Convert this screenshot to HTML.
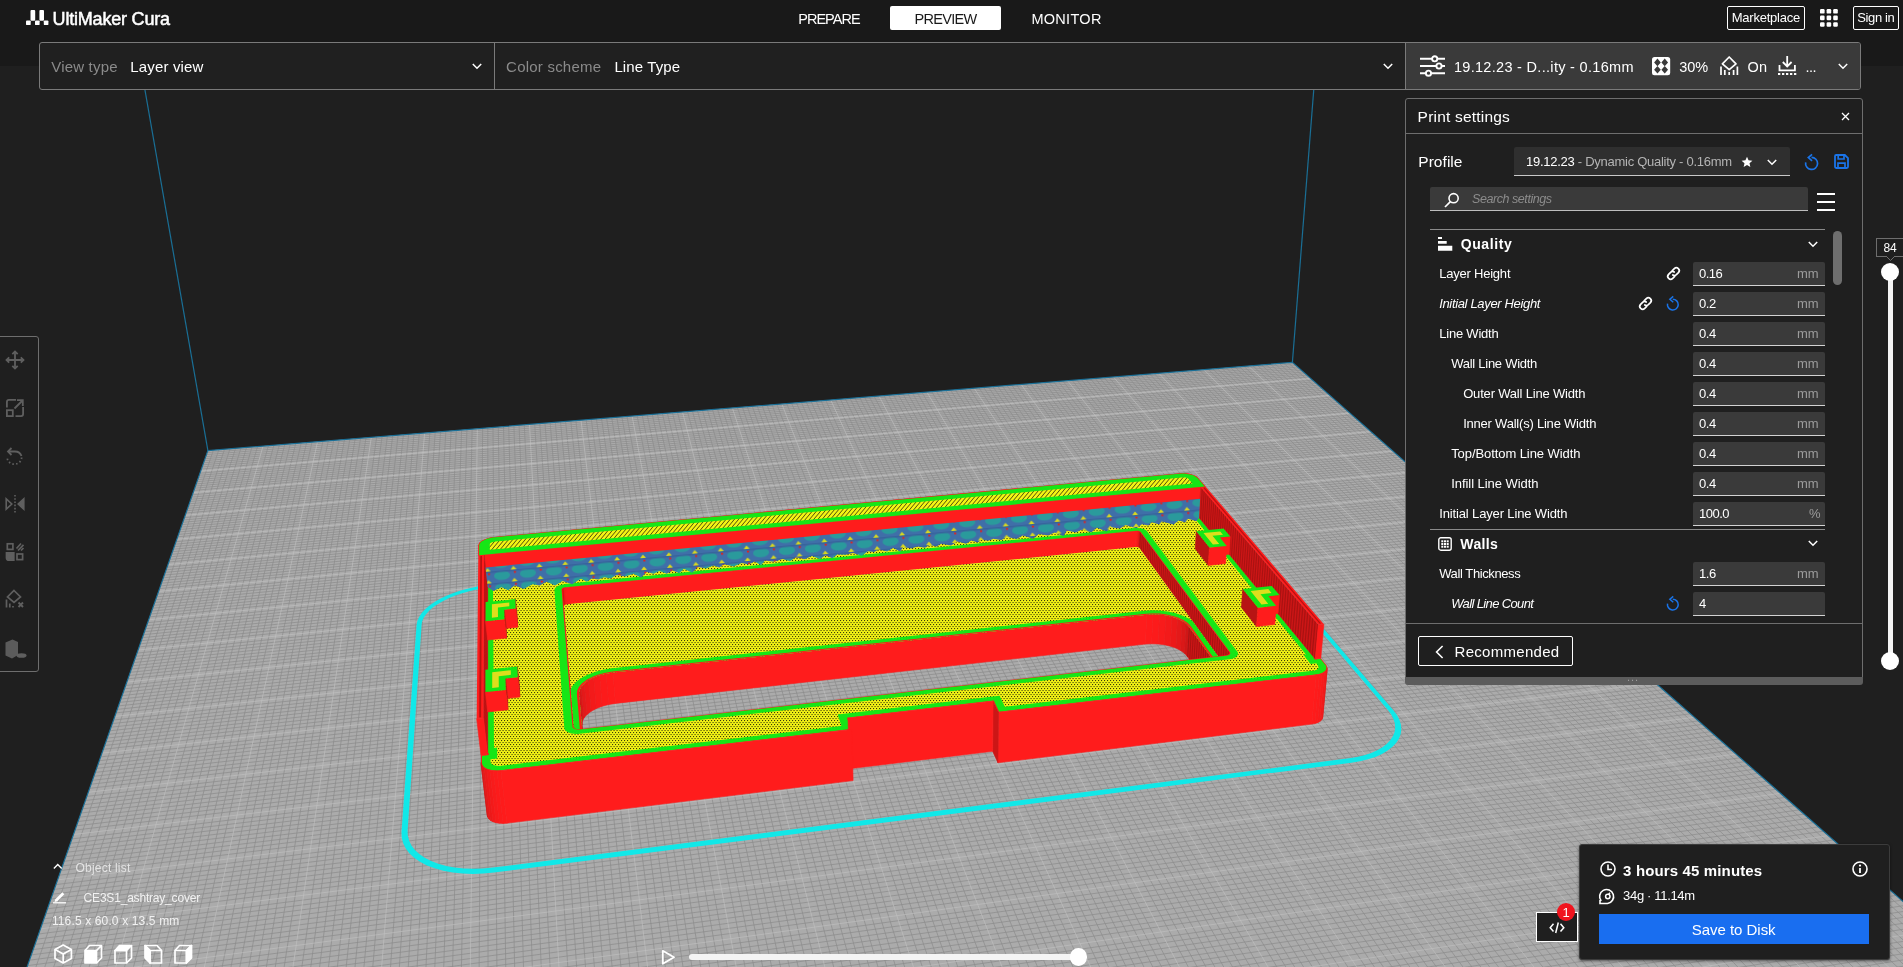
<!DOCTYPE html>
<html lang="en"><head><meta charset="utf-8"><title>UltiMaker Cura</title>
<style>
html,body{margin:0;padding:0;background:#1f1f1f;overflow:hidden}
body{width:1903px;height:967px;position:relative;font-family:'Liberation Sans', sans-serif;}
.t{position:absolute;white-space:pre;}
.a{position:absolute;box-sizing:border-box}
svg{position:absolute;overflow:visible}
</style></head><body>
<svg width="1903" height="967" viewBox="0 0 1903 967" style="position:absolute;left:0;top:0">
<rect width="1903" height="967" fill="#1f1f1f"/>
<defs><clipPath id="bedclip"><polygon points="207.9,450.6 1292.4,362.4 2061.2,1041.2 -132.9,1424.0"/></clipPath>
<pattern id="yl" width="3" height="4" patternUnits="userSpaceOnUse"><rect width="3" height="4" fill="#f2f214"/><rect x="0" y="0" width="1.1" height="1.1" fill="#3a3a08"/><rect x="1.5" y="2" width="1.1" height="1.1" fill="#3a3a08"/></pattern>
<pattern id="yl2" width="4" height="3.2" patternUnits="userSpaceOnUse" patternTransform="rotate(-50)"><rect width="4" height="3.2" fill="#f4f414"/><rect x="0" y="0" width="4" height="0.8" fill="#55550c"/></pattern>
<pattern id="rs" width="4" height="8" patternUnits="userSpaceOnUse"><rect width="4" height="8" fill="#ff1c1c"/><rect x="0" y="0" width="1.6" height="8" fill="#b01010"/></pattern>
<pattern id="bl" width="26" height="12" patternUnits="userSpaceOnUse" patternTransform="rotate(-5)"><rect width="26" height="12" fill="#3f6fa8"/><ellipse cx="8" cy="5" rx="8" ry="4.5" fill="#2a9a9c"/><path d="M17 12 l3 -3.500 l3 3.500z" fill="#d8d820"/><rect x="20" y="1.500" width="2.200" height="2" fill="#e02020"/><path d="M0 0h26v1.500h-26z" fill="#37639c"/></pattern>
</defs>
<polygon points="207.9,450.6 1292.4,362.4 2061.2,1041.2 -132.9,1424.0" fill="#ababab"/>
<g clip-path="url(#bedclip)"><path d="M213.4,450.2 L-120.2,1421.8 M207.2,452.6 L1294.2,363.9 M218.9,449.7 L-107.5,1419.6 M206.5,454.6 L1296.0,365.5 M224.5,449.3 L-94.9,1417.4 M205.7,456.7 L1297.8,367.1 M230.0,448.8 L-82.3,1415.2 M205.0,458.7 L1299.6,368.7 M235.5,448.4 L-69.7,1413.0 M204.3,460.7 L1301.4,370.3 M241.0,447.9 L-57.1,1410.8 M203.6,462.8 L1303.2,372.0 M246.5,447.5 L-44.6,1408.6 M202.9,464.8 L1305.1,373.6 M252.0,447.0 L-32.1,1406.4 M202.2,466.9 L1306.9,375.2 M257.5,446.6 L-19.7,1404.3 M201.4,469.0 L1308.8,376.9 M268.4,445.7 L5.1,1399.9 M200.0,473.2 L1312.5,380.2 M273.9,445.2 L17.5,1397.8 M199.2,475.3 L1314.4,381.8 M279.4,444.8 L29.8,1395.6 M198.5,477.4 L1316.3,383.5 M284.8,444.4 L42.1,1393.5 M197.7,479.6 L1318.2,385.2 M290.3,443.9 L54.4,1391.3 M197.0,481.7 L1320.1,386.8 M295.7,443.5 L66.7,1389.2 M196.2,483.9 L1322.0,388.5 M301.2,443.0 L78.9,1387.1 M195.5,486.0 L1324.0,390.2 M306.6,442.6 L91.0,1384.9 M194.7,488.2 L1325.9,391.9 M312.0,442.1 L103.2,1382.8 M193.9,490.4 L1327.8,393.7 M322.9,441.3 L127.4,1378.6 M192.4,494.8 L1331.7,397.1 M328.3,440.8 L139.5,1376.5 M191.6,497.1 L1333.7,398.9 M333.7,440.4 L151.5,1374.4 M190.8,499.3 L1335.7,400.6 M339.1,439.9 L163.5,1372.3 M190.0,501.5 L1337.7,402.4 M344.5,439.5 L175.5,1370.2 M189.2,503.8 L1339.7,404.1 M349.9,439.1 L187.4,1368.1 M188.4,506.1 L1341.7,405.9 M355.2,438.6 L199.3,1366.0 M187.6,508.4 L1343.7,407.7 M360.6,438.2 L211.2,1364.0 M186.8,510.7 L1345.7,409.5 M366.0,437.8 L223.1,1361.9 M186.0,513.0 L1347.8,411.3 M376.7,436.9 L246.7,1357.8 M184.4,517.6 L1351.9,414.9 M382.1,436.4 L258.5,1355.7 M183.6,520.0 L1353.9,416.7 M387.4,436.0 L270.2,1353.7 M182.8,522.3 L1356.0,418.6 M392.7,435.6 L282.0,1351.6 M181.9,524.7 L1358.1,420.4 M398.1,435.1 L293.7,1349.6 M181.1,527.1 L1360.2,422.2 M403.4,434.7 L305.3,1347.6 M180.2,529.5 L1362.3,424.1 M408.7,434.3 L316.9,1345.5 M179.4,531.9 L1364.4,426.0 M414.0,433.8 L328.6,1343.5 M178.5,534.4 L1366.6,427.9 M419.3,433.4 L340.1,1341.5 M177.7,536.8 L1368.7,429.7 M429.9,432.5 L363.2,1337.5 M176.0,541.7 L1373.0,433.5 M435.2,432.1 L374.7,1335.5 M175.1,544.2 L1375.2,435.5 M440.5,431.7 L386.2,1333.5 M174.2,546.7 L1377.3,437.4 M445.8,431.3 L397.6,1331.5 M173.3,549.2 L1379.5,439.3 M451.1,430.8 L409.0,1329.5 M172.5,551.7 L1381.7,441.3 M456.3,430.4 L420.4,1327.5 M171.6,554.3 L1383.9,443.2 M461.6,430.0 L431.8,1325.5 M170.7,556.8 L1386.2,445.2 M466.9,429.5 L443.1,1323.5 M169.8,559.4 L1388.4,447.1 M472.1,429.1 L454.4,1321.5 M168.9,562.0 L1390.6,449.1 M482.6,428.3 L476.9,1317.6 M167.1,567.2 L1395.2,453.1 M487.8,427.8 L488.2,1315.7 M166.1,569.8 L1397.4,455.1 M493.0,427.4 L499.4,1313.7 M165.2,572.4 L1399.7,457.2 M498.3,427.0 L510.5,1311.7 M164.3,575.1 L1402.0,459.2 M503.5,426.6 L521.7,1309.8 M163.3,577.8 L1404.4,461.2 M508.7,426.1 L532.8,1307.9 M162.4,580.5 L1406.7,463.3 M513.9,425.7 L543.9,1305.9 M161.5,583.2 L1409.0,465.3 M519.1,425.3 L555.0,1304.0 M160.5,585.9 L1411.4,467.4 M524.3,424.9 L566.0,1302.1 M159.6,588.6 L1413.7,469.5 M534.7,424.0 L588.0,1298.2 M157.6,594.1 L1418.5,473.7 M539.8,423.6 L599.0,1296.3 M156.6,596.9 L1420.9,475.8 M545.0,423.2 L609.9,1294.4 M155.7,599.7 L1423.3,477.9 M550.2,422.8 L620.8,1292.5 M154.7,602.5 L1425.7,480.1 M555.3,422.3 L631.7,1290.6 M153.7,605.4 L1428.1,482.2 M560.5,421.9 L642.6,1288.7 M152.7,608.2 L1430.6,484.4 M565.6,421.5 L653.4,1286.8 M151.7,611.1 L1433.1,486.6 M570.8,421.1 L664.3,1284.9 M150.7,614.0 L1435.5,488.8 M575.9,420.7 L675.1,1283.0 M149.7,616.9 L1438.0,490.9 M586.2,419.8 L696.6,1279.3 M147.6,622.7 L1443.0,495.4 M591.3,419.4 L707.3,1277.4 M146.6,625.7 L1445.6,497.6 M596.4,419.0 L718.0,1275.6 M145.5,628.7 L1448.1,499.8 M601.5,418.6 L728.6,1273.7 M144.5,631.7 L1450.6,502.1 M606.6,418.2 L739.3,1271.8 M143.4,634.7 L1453.2,504.4 M611.7,417.8 L749.9,1270.0 M142.4,637.7 L1455.8,506.6 M616.8,417.3 L760.5,1268.1 M141.3,640.7 L1458.4,508.9 M621.9,416.9 L771.1,1266.3 M140.2,643.8 L1461.0,511.2 M627.0,416.5 L781.6,1264.4 M139.2,646.9 L1463.6,513.6 M637.1,415.7 L802.6,1260.8 M137.0,653.1 L1468.9,518.2 M642.2,415.3 L813.1,1259.0 M135.9,656.3 L1471.6,520.6 M647.2,414.9 L823.5,1257.1 M134.8,659.4 L1474.2,522.9 M652.3,414.5 L834.0,1255.3 M133.7,662.6 L1476.9,525.3 M657.4,414.0 L844.4,1253.5 M132.5,665.8 L1479.6,527.7 M662.4,413.6 L854.8,1251.7 M131.4,669.0 L1482.4,530.1 M667.4,413.2 L865.1,1249.9 M130.3,672.3 L1485.1,532.5 M672.5,412.8 L875.4,1248.1 M129.1,675.5 L1487.9,535.0 M677.5,412.4 L885.8,1246.3 M128.0,678.8 L1490.6,537.4 M687.5,411.6 L906.3,1242.7 M125.6,685.5 L1496.2,542.3 M692.5,411.2 L916.5,1240.9 M124.5,688.8 L1499.0,544.8 M697.5,410.8 L926.8,1239.1 M123.3,692.2 L1501.9,547.3 M702.5,410.4 L936.9,1237.3 M122.1,695.6 L1504.7,549.8 M707.5,410.0 L947.1,1235.6 M120.9,699.0 L1507.6,552.4 M712.5,409.6 L957.3,1233.8 M119.7,702.4 L1510.4,554.9 M717.5,409.1 L967.4,1232.0 M118.5,705.9 L1513.3,557.5 M722.5,408.7 L977.5,1230.3 M117.3,709.4 L1516.3,560.0 M727.5,408.3 L987.6,1228.5 M116.0,712.9 L1519.2,562.6 M737.4,407.5 L1007.7,1225.0 M113.6,720.0 L1525.1,567.8 M742.4,407.1 L1017.7,1223.3 M112.3,723.6 L1528.1,570.5 M747.3,406.7 L1027.7,1221.5 M111.1,727.2 L1531.1,573.1 M752.3,406.3 L1037.6,1219.8 M109.8,730.8 L1534.1,575.8 M757.2,405.9 L1047.6,1218.0 M108.5,734.4 L1537.1,578.4 M762.1,405.5 L1057.5,1216.3 M107.2,738.1 L1540.2,581.1 M767.1,405.1 L1067.4,1214.6 M105.9,741.8 L1543.2,583.8 M772.0,404.7 L1077.3,1212.9 M104.6,745.5 L1546.3,586.6 M776.9,404.3 L1087.2,1211.1 M103.3,749.3 L1549.4,589.3 M786.7,403.5 L1106.8,1207.7 M100.7,756.9 L1555.7,594.8 M791.6,403.1 L1116.6,1206.0 M99.3,760.7 L1558.8,597.6 M796.5,402.7 L1126.4,1204.3 M98.0,764.6 L1562.0,600.4 M801.4,402.3 L1136.1,1202.6 M96.6,768.4 L1565.2,603.2 M806.3,401.9 L1145.9,1200.9 M95.2,772.4 L1568.4,606.1 M811.2,401.5 L1155.6,1199.2 M93.9,776.3 L1571.6,608.9 M816.1,401.1 L1165.3,1197.5 M92.5,780.3 L1574.9,611.8 M821.0,400.7 L1174.9,1195.8 M91.1,784.2 L1578.2,614.7 M825.8,400.3 L1184.6,1194.1 M89.7,788.3 L1581.5,617.6 M835.5,399.5 L1203.8,1190.8 M86.8,796.4 L1588.1,623.5 M840.4,399.1 L1213.4,1189.1 M85.4,800.5 L1591.5,626.4 M845.3,398.7 L1222.9,1187.4 M83.9,804.7 L1594.8,629.4 M850.1,398.4 L1232.5,1185.8 M82.5,808.8 L1598.2,632.4 M854.9,398.0 L1242.0,1184.1 M81.0,813.0 L1601.6,635.4 M859.8,397.6 L1251.5,1182.5 M79.5,817.2 L1605.1,638.4 M864.6,397.2 L1261.0,1180.8 M78.0,821.5 L1608.5,641.5 M869.4,396.8 L1270.4,1179.1 M76.5,825.8 L1612.0,644.6 M874.2,396.4 L1279.9,1177.5 M75.0,830.1 L1615.5,647.7 M883.9,395.6 L1298.7,1174.2 M72.0,838.9 L1622.6,653.9 M888.7,395.2 L1308.1,1172.6 M70.4,843.3 L1626.1,657.0 M893.5,394.8 L1317.4,1170.9 M68.8,847.7 L1629.7,660.2 M898.2,394.4 L1326.8,1169.3 M67.3,852.2 L1633.3,663.4 M903.0,394.0 L1336.1,1167.7 M65.7,856.7 L1637.0,666.6 M907.8,393.7 L1345.4,1166.1 M64.1,861.3 L1640.6,669.8 M912.6,393.3 L1354.7,1164.5 M62.5,865.9 L1644.3,673.1 M917.4,392.9 L1363.9,1162.8 M60.9,870.5 L1648.0,676.4 M922.1,392.5 L1373.2,1161.2 M59.2,875.2 L1651.7,679.7 M931.7,391.7 L1391.6,1158.0 M55.9,884.6 L1659.3,686.3 M936.4,391.3 L1400.8,1156.4 M54.3,889.4 L1663.1,689.7 M941.1,390.9 L1409.9,1154.8 M52.6,894.2 L1666.9,693.0 M945.9,390.6 L1419.1,1153.2 M50.9,899.0 L1670.7,696.4 M950.6,390.2 L1428.2,1151.6 M49.2,903.9 L1674.6,699.9 M955.4,389.8 L1437.3,1150.0 M47.5,908.8 L1678.5,703.3 M960.1,389.4 L1446.4,1148.5 M45.7,913.8 L1682.4,706.8 M964.8,389.0 L1455.4,1146.9 M44.0,918.8 L1686.4,710.3 M969.5,388.6 L1464.5,1145.3 M42.2,923.8 L1690.4,713.8 M979.0,387.9 L1482.5,1142.1 M38.6,934.0 L1698.4,720.9 M983.7,387.5 L1491.5,1140.6 M36.8,939.2 L1702.5,724.4 M988.4,387.1 L1500.5,1139.0 M35.0,944.4 L1706.6,728.1 M993.0,386.7 L1509.4,1137.5 M33.2,949.6 L1710.7,731.7 M997.7,386.3 L1518.3,1135.9 M31.3,954.9 L1714.8,735.3 M1002.4,386.0 L1527.2,1134.3 M29.5,960.2 L1719.0,739.0 M1007.1,385.6 L1536.1,1132.8 M27.6,965.6 L1723.2,742.7 M1011.8,385.2 L1545.0,1131.2 M25.7,971.0 L1727.4,746.5 M1016.4,384.8 L1553.9,1129.7 M23.8,976.5 L1731.7,750.2 M1025.8,384.1 L1571.5,1126.6 M19.9,987.5 L1740.3,757.8 M1030.4,383.7 L1580.3,1125.1 M17.9,993.1 L1744.6,761.7 M1035.1,383.3 L1589.1,1123.5 M16.0,998.8 L1749.0,765.5 M1039.7,382.9 L1597.9,1122.0 M14.0,1004.5 L1753.4,769.4 M1044.3,382.5 L1606.6,1120.5 M12.0,1010.2 L1757.8,773.3 M1049.0,382.2 L1615.4,1119.0 M9.9,1016.0 L1762.3,777.3 M1053.6,381.8 L1624.1,1117.4 M7.9,1021.8 L1766.8,781.2 M1058.2,381.4 L1632.8,1115.9 M5.8,1027.7 L1771.3,785.2 M1062.9,381.0 L1641.4,1114.4 M3.8,1033.7 L1775.9,789.3 M1072.1,380.3 L1658.7,1111.4 M-0.5,1045.7 L1785.1,797.4 M1076.7,379.9 L1667.3,1109.9 M-2.6,1051.8 L1789.8,801.5 M1081.3,379.5 L1675.9,1108.4 M-4.8,1058.0 L1794.5,805.7 M1085.9,379.2 L1684.5,1106.9 M-6.9,1064.2 L1799.2,809.9 M1090.5,378.8 L1693.1,1105.4 M-9.1,1070.4 L1804.0,814.1 M1095.1,378.4 L1701.6,1103.9 M-11.3,1076.8 L1808.8,818.3 M1099.7,378.0 L1710.2,1102.4 M-13.6,1083.1 L1813.6,822.6 M1104.2,377.7 L1718.7,1100.9 M-15.8,1089.6 L1818.5,826.9 M1108.8,377.3 L1727.2,1099.5 M-18.1,1096.1 L1823.4,831.2 M1117.9,376.6 L1744.1,1096.5 M-22.7,1109.2 L1833.3,840.0 M1122.5,376.2 L1752.6,1095.0 M-25.0,1115.9 L1838.3,844.4 M1127.1,375.8 L1761.0,1093.5 M-27.4,1122.6 L1843.4,848.8 M1131.6,375.4 L1769.4,1092.1 M-29.8,1129.4 L1848.5,853.3 M1136.2,375.1 L1777.8,1090.6 M-32.2,1136.3 L1853.6,857.9 M1140.7,374.7 L1786.2,1089.2 M-34.6,1143.2 L1858.8,862.4 M1145.2,374.3 L1794.5,1087.7 M-37.0,1150.2 L1864.0,867.0 M1149.8,374.0 L1802.9,1086.2 M-39.5,1157.2 L1869.2,871.7 M1154.3,373.6 L1811.2,1084.8 M-42.0,1164.3 L1874.5,876.3 M1163.3,372.9 L1827.8,1081.9 M-47.0,1178.8 L1885.2,885.8 M1167.8,372.5 L1836.1,1080.4 M-49.6,1186.1 L1890.6,890.6 M1172.4,372.1 L1844.3,1079.0 M-52.2,1193.5 L1896.1,895.4 M1176.9,371.8 L1852.6,1077.6 M-54.8,1200.9 L1901.6,900.2 M1181.4,371.4 L1860.8,1076.1 M-57.4,1208.5 L1907.1,905.1 M1185.9,371.0 L1869.0,1074.7 M-60.1,1216.1 L1912.7,910.0 M1190.3,370.7 L1877.2,1073.3 M-62.8,1223.8 L1918.3,915.0 M1194.8,370.3 L1885.4,1071.8 M-65.5,1231.5 L1924.0,920.0 M1199.3,369.9 L1893.6,1070.4 M-68.3,1239.4 L1929.7,925.1 M1208.3,369.2 L1909.8,1067.6 M-73.8,1255.3 L1941.3,935.3 M1212.7,368.8 L1917.9,1066.2 M-76.6,1263.4 L1947.1,940.4 M1217.2,368.5 L1926.0,1064.8 M-79.5,1271.5 L1953.0,945.7 M1221.6,368.1 L1934.1,1063.3 M-82.4,1279.8 L1959.0,950.9 M1226.1,367.8 L1942.2,1061.9 M-85.3,1288.1 L1965.0,956.2 M1230.5,367.4 L1950.2,1060.5 M-88.2,1296.5 L1971.0,961.5 M1235.0,367.0 L1958.2,1059.1 M-91.2,1305.0 L1977.1,966.9 M1239.4,366.7 L1966.3,1057.7 M-94.2,1313.6 L1983.3,972.4 M1243.9,366.3 L1974.3,1056.3 M-97.3,1322.3 L1989.5,977.8 M1252.7,365.6 L1990.2,1053.6 M-103.4,1339.9 L2002.0,988.9 M1257.2,365.2 L1998.2,1052.2 M-106.6,1348.8 L2008.4,994.5 M1261.6,364.9 L2006.1,1050.8 M-109.7,1357.9 L2014.8,1000.2 M1266.0,364.5 L2014.0,1049.4 M-112.9,1367.0 L2021.2,1005.9 M1270.4,364.1 L2021.9,1048.0 M-116.2,1376.3 L2027.8,1011.6 M1274.8,363.8 L2029.8,1046.6 M-119.4,1385.6 L2034.3,1017.4 M1279.2,363.4 L2037.7,1045.3 M-122.8,1395.1 L2041.0,1023.3 M1283.6,363.1 L2045.5,1043.9 M-126.1,1404.6 L2047.7,1029.2 M1288.0,362.7 L2053.4,1042.5 M-129.5,1414.3 L2054.4,1035.2" stroke="#8c8c8c" stroke-width="0.8" fill="none" opacity="0.9"/>
<path d="M207.9,450.6 L-132.9,1424.0 M207.9,450.6 L1292.4,362.4 M263.0,446.1 L-7.3,1402.1 M200.7,471.1 L1310.7,378.5 M317.5,441.7 L115.3,1380.7 M193.2,492.6 L1329.8,395.4 M371.3,437.3 L234.9,1359.8 M185.2,515.3 L1349.8,413.1 M424.6,433.0 L351.7,1339.5 M176.8,539.3 L1370.8,431.6 M477.3,428.7 L465.7,1319.6 M168.0,564.6 L1392.9,451.1 M529.5,424.4 L577.0,1300.1 M158.6,591.4 L1416.1,471.6 M581.0,420.3 L685.8,1281.2 M148.6,619.8 L1440.5,493.2 M632.1,416.1 L792.1,1262.6 M138.1,650.0 L1466.3,515.9 M682.5,412.0 L896.0,1244.5 M126.8,682.1 L1493.4,539.9 M732.4,407.9 L997.6,1226.8 M114.8,716.4 L1522.1,565.2 M781.8,403.9 L1097.0,1209.4 M102.0,753.1 L1552.5,592.1 M830.7,399.9 L1194.2,1192.5 M88.2,792.3 L1584.8,620.5 M879.0,396.0 L1289.3,1175.9 M73.5,834.5 L1619.0,650.8 M926.9,392.1 L1382.4,1159.6 M57.6,879.9 L1655.5,683.0 M974.2,388.3 L1473.5,1143.7 M40.4,928.9 L1694.4,717.3 M1021.1,384.4 L1562.7,1128.2 M21.9,982.0 L1736.0,754.0 M1067.5,380.7 L1650.1,1112.9 M1.7,1039.7 L1780.5,793.3 M1113.4,376.9 L1735.7,1098.0 M-20.4,1102.6 L1828.3,835.6 M1158.8,373.2 L1819.5,1083.3 M-44.5,1171.5 L1879.8,881.0 M1203.8,369.6 L1901.7,1069.0 M-71.0,1247.3 L1935.5,930.1 M1248.3,365.9 L1982.2,1054.9 M-100.3,1331.0 L1995.7,983.3 M1292.4,362.4 L2061.2,1041.2 M-132.9,1424.0 L2061.2,1041.2" stroke="#c2c2c2" stroke-width="1" fill="none" opacity="0.6"/></g>
<polygon points="207.9,450.6 1292.4,362.4 2061.2,1041.2 -132.9,1424.0" fill="none" stroke="#1a6f96" stroke-width="1.2"/>
<path d="M207.9,450.6 L-120.8,-1432.8" stroke="#1a6f96" stroke-width="1.2"/>
<path d="M1292.4,362.4 L1420.1,-1268.1" stroke="#1a6f96" stroke-width="1.2"/>
<path d="M401.5,832.1 L401.7,837.7 L403.1,843.1 L405.6,848.3 L409.3,853.2 L414.1,857.7 L420.0,861.8 L426.9,865.4 L434.7,868.3 L443.3,870.7 L452.7,872.5 L462.5,873.5 L472.8,873.9 L483.4,873.5 L494.1,872.5 L1351.4,762.7 L1360.0,761.3 L1368.1,759.3 L1375.4,756.9 L1382.0,753.9 L1387.7,750.6 L1392.5,746.8 L1396.3,742.8 L1399.0,738.5 L1400.7,733.9 L1401.3,729.3 L1400.9,724.5 L1399.4,719.7 L1397.0,715.0 L1393.5,710.4 L1248.1,540.5 L1245.0,537.3 L1241.1,534.3 L1236.5,531.5 L1231.4,528.8 L1225.6,526.4 L1219.4,524.3 L1212.8,522.5 L1205.8,520.9 L1198.6,519.7 L1191.2,518.9 L1183.8,518.3 L1176.3,518.1 L1169.0,518.3 L1161.8,518.8 L492.5,584.3 L484.4,585.3 L476.3,586.7 L468.4,588.5 L460.7,590.6 L453.4,593.0 L446.5,595.8 L440.2,598.8 L434.5,602.1 L429.5,605.6 L425.2,609.2 L421.7,613.0 L419.1,616.9 L417.4,620.8 L416.6,624.7Z M422.2,621.2 L423.8,617.6 L426.2,614.0 L429.4,610.5 L433.3,607.1 L438.0,603.9 L443.2,600.9 L449.1,598.0 L455.4,595.5 L462.2,593.2 L469.2,591.2 L476.6,589.6 L484.0,588.3 L491.6,587.4 L1164.6,521.3 L1171.2,520.9 L1178.1,520.7 L1184.9,520.9 L1191.8,521.4 L1198.7,522.2 L1205.3,523.3 L1211.8,524.7 L1217.9,526.4 L1223.7,528.4 L1229.0,530.6 L1233.7,533.0 L1237.9,535.7 L1241.5,538.5 L1244.4,541.4 L1388.1,710.3 L1391.2,714.5 L1393.5,718.9 L1394.8,723.3 L1395.2,727.7 L1394.6,731.9 L1393.0,736.1 L1390.4,740.1 L1386.9,743.8 L1382.5,747.2 L1377.3,750.3 L1371.2,753.0 L1364.4,755.2 L1357.0,757.0 L1349.1,758.3 L492.8,867.6 L483.0,868.5 L473.3,868.8 L463.8,868.5 L454.8,867.5 L446.2,865.9 L438.3,863.8 L431.1,861.0 L424.7,857.8 L419.3,854.0 L414.9,849.9 L411.4,845.4 L409.1,840.6 L407.8,835.6 L407.6,830.4 L421.6,624.8Z" fill="#10e8e8" fill-rule="evenodd"/>
<polygon points="1153.1,614.3 1159.5,614.5 1158.0,644.0 1151.6,643.8" fill="#fc1b1b" stroke="#fc1b1b" stroke-width="0.6"/>
<polygon points="1159.5,614.5 1165.9,615.3 1164.4,644.8 1158.0,644.0" fill="#f81b1b" stroke="#f81b1b" stroke-width="0.6"/>
<polygon points="1146.8,614.7 1153.1,614.3 1151.6,643.8 1145.4,644.1" fill="#fe1b1b" stroke="#fe1b1b" stroke-width="0.6"/>
<polygon points="1165.9,615.3 1172.0,616.7 1170.4,646.2 1164.4,644.8" fill="#f31a1a" stroke="#f31a1a" stroke-width="0.6"/>
<polygon points="1172.0,616.7 1177.5,618.5 1175.9,648.1 1170.4,646.2" fill="#ec1919" stroke="#ec1919" stroke-width="0.6"/>
<polygon points="1177.5,618.5 1182.3,620.9 1180.6,650.5 1175.9,648.1" fill="#e41919" stroke="#e41919" stroke-width="0.6"/>
<polygon points="1182.3,620.9 1186.2,623.5 1184.5,653.2 1180.6,650.5" fill="#da1818" stroke="#da1818" stroke-width="0.6"/>
<polygon points="1186.2,623.5 1188.9,626.5 1187.2,656.2 1184.5,653.2" fill="#d01616" stroke="#d01616" stroke-width="0.6"/>
<polygon points="1188.9,626.5 1221.4,671.6 1219.4,702.4 1187.2,656.2" fill="#cc1616" stroke="#cc1616" stroke-width="0.6"/><path d="M1188.9,626.5 L1189.8,627.7 L1188.1,657.5 L1187.2,656.2Z M1190.9,629.3 L1191.8,630.5 L1190.1,660.3 L1189.2,659.1Z M1193.0,632.1 L1193.9,633.3 L1192.1,663.2 L1191.2,661.9Z M1195.0,634.9 L1195.9,636.2 L1194.1,666.1 L1193.2,664.8Z M1197.0,637.7 L1198.0,639.0 L1196.1,669.0 L1195.2,667.7Z M1199.1,640.6 L1200.0,641.9 L1198.2,672.0 L1197.3,670.7Z M1201.2,643.5 L1202.1,644.8 L1200.2,674.9 L1199.3,673.6Z M1203.2,646.4 L1204.2,647.7 L1202.3,677.9 L1201.4,676.6Z M1205.3,649.3 L1206.3,650.6 L1204.4,680.9 L1203.4,679.5Z M1207.4,652.2 L1208.4,653.5 L1206.5,683.9 L1205.5,682.5Z M1209.6,655.1 L1210.5,656.5 L1208.6,686.9 L1207.6,685.5Z M1211.7,658.1 L1212.7,659.4 L1210.7,689.9 L1209.7,688.6Z M1213.8,661.1 L1214.8,662.4 L1212.8,693.0 L1211.9,691.6Z M1216.0,664.1 L1217.0,665.4 L1215.0,696.1 L1214.0,694.7Z M1218.2,667.1 L1219.1,668.4 L1217.1,699.1 L1216.1,697.7Z M1220.3,670.1 L1221.3,671.5 L1219.3,702.2 L1218.3,700.8Z" fill="#a81212"/>
<polygon points="612.9,672.6 1146.8,614.7 1145.4,644.1 615.5,703.4" fill="#ff1c1c" stroke="#ff1c1c" stroke-width="0.6"/>
<polygon points="606.1,673.7 612.9,672.6 615.5,703.4 608.7,704.5" fill="#fe1b1b" stroke="#fe1b1b" stroke-width="0.6"/>
<polygon points="599.6,675.3 606.1,673.7 608.7,704.5 602.2,706.2" fill="#fc1b1b" stroke="#fc1b1b" stroke-width="0.6"/>
<polygon points="593.6,677.6 599.6,675.3 602.2,706.2 596.3,708.5" fill="#f81b1b" stroke="#f81b1b" stroke-width="0.6"/>
<polygon points="588.4,680.3 593.6,677.6 596.3,708.5 591.2,711.3" fill="#f31a1a" stroke="#f31a1a" stroke-width="0.6"/>
<polygon points="1221.4,671.6 1221.6,672.0 1219.6,702.7 1219.4,702.4" fill="#cc1616" stroke="#cc1616" stroke-width="0.6"/>
<polygon points="1221.6,672.0 1221.7,672.3 1219.6,703.1 1219.6,702.7" fill="#cc1616" stroke="#cc1616" stroke-width="0.6"/>
<polygon points="584.2,683.4 588.4,680.3 591.2,711.3 587.1,714.4" fill="#ec1919" stroke="#ec1919" stroke-width="0.6"/>
<polygon points="581.2,686.7 584.2,683.4 587.1,714.4 584.1,717.8" fill="#e41919" stroke="#e41919" stroke-width="0.6"/>
<polygon points="579.5,690.2 581.2,686.7 584.1,717.8 582.3,721.4" fill="#da1818" stroke="#da1818" stroke-width="0.6"/>
<polygon points="579.1,693.7 579.5,690.2 582.3,721.4 582.0,725.0" fill="#d01616" stroke="#d01616" stroke-width="0.6"/>
<polygon points="583.6,745.5 579.1,693.7 582.0,725.0 586.6,777.9" fill="#cc1616" stroke="#cc1616" stroke-width="0.6"/><path d="M583.6,745.5 L583.5,744.0 L586.5,776.3 L586.6,777.9Z M583.3,742.0 L583.2,740.5 L586.2,772.7 L586.3,774.3Z M583.0,738.6 L582.9,737.0 L585.9,769.2 L586.0,770.8Z M582.7,735.1 L582.6,733.6 L585.5,765.7 L585.7,767.3Z M582.4,731.7 L582.3,730.1 L585.2,762.2 L585.4,763.8Z M582.1,728.3 L582.0,726.7 L584.9,758.7 L585.1,760.3Z M581.8,724.9 L581.7,723.4 L584.6,755.3 L584.8,756.8Z M581.5,721.5 L581.4,720.0 L584.3,751.8 L584.5,753.4Z M581.2,718.2 L581.1,716.7 L584.0,748.4 L584.2,750.0Z M580.9,714.9 L580.8,713.4 L583.7,745.0 L583.9,746.6Z M580.6,711.5 L580.5,710.1 L583.4,741.7 L583.6,743.2Z M580.3,708.3 L580.2,706.8 L583.1,738.3 L583.3,739.8Z M580.1,705.0 L579.9,703.5 L582.8,735.0 L583.0,736.5Z M579.8,701.8 L579.6,700.3 L582.6,731.7 L582.7,733.2Z M579.5,698.5 L579.4,697.1 L582.3,728.4 L582.4,729.9Z M579.2,695.3 L579.1,693.9 L582.0,725.2 L582.1,726.6Z" fill="#a81212"/>
<polygon points="1136.9,531.0 1137.5,531.1 1136.8,547.1 1136.2,547.1" fill="#fc1b1b" stroke="#fc1b1b" stroke-width="0.6"/>
<polygon points="1137.5,531.1 1138.1,531.1 1137.3,547.1 1136.8,547.1" fill="#f81b1b" stroke="#f81b1b" stroke-width="0.6"/>
<polygon points="1136.3,531.1 1136.9,531.0 1136.2,547.1 1135.6,547.1" fill="#fe1b1b" stroke="#fe1b1b" stroke-width="0.6"/>
<polygon points="1138.1,531.1 1138.6,531.2 1137.9,547.3 1137.3,547.1" fill="#f31a1a" stroke="#f31a1a" stroke-width="0.6"/>
<polygon points="1138.6,531.2 1139.1,531.4 1138.4,547.4 1137.9,547.3" fill="#ec1919" stroke="#ec1919" stroke-width="0.6"/>
<polygon points="1139.1,531.4 1139.6,531.6 1138.8,547.6 1138.4,547.4" fill="#e41919" stroke="#e41919" stroke-width="0.6"/>
<polygon points="1139.6,531.6 1139.9,531.8 1139.2,547.8 1138.8,547.6" fill="#da1818" stroke="#da1818" stroke-width="0.6"/>
<polygon points="1139.9,531.8 1140.2,532.1 1139.4,548.1 1139.2,547.8" fill="#d01616" stroke="#d01616" stroke-width="0.6"/>
<polygon points="565.6,587.5 1136.3,531.1 1135.6,547.1 567.2,604.3" fill="#ff1c1c" stroke="#ff1c1c" stroke-width="0.6"/>
<polygon points="565.0,587.6 565.6,587.5 567.2,604.3 566.6,604.4" fill="#fe1b1b" stroke="#fe1b1b" stroke-width="0.6"/>
<polygon points="564.4,587.8 565.0,587.6 566.6,604.4 566.0,604.6" fill="#fc1b1b" stroke="#fc1b1b" stroke-width="0.6"/>
<polygon points="563.8,588.0 564.4,587.8 566.0,604.6 565.4,604.8" fill="#f81b1b" stroke="#f81b1b" stroke-width="0.6"/>
<polygon points="563.3,588.2 563.8,588.0 565.4,604.8 564.9,605.0" fill="#f31a1a" stroke="#f31a1a" stroke-width="0.6"/>
<polygon points="562.9,588.4 563.3,588.2 564.9,605.0 564.5,605.3" fill="#ec1919" stroke="#ec1919" stroke-width="0.6"/>
<polygon points="562.6,588.7 562.9,588.4 564.5,605.3 564.2,605.6" fill="#e41919" stroke="#e41919" stroke-width="0.6"/>
<polygon points="562.5,589.0 562.6,588.7 564.2,605.6 564.1,605.9" fill="#da1818" stroke="#da1818" stroke-width="0.6"/>
<polygon points="562.4,589.3 562.5,589.0 564.1,605.9 564.0,606.1" fill="#d01616" stroke="#d01616" stroke-width="0.6"/>
<polygon points="1140.2,532.1 1229.1,652.1 1227.9,669.8 1139.4,548.1" fill="#cc1616" stroke="#cc1616" stroke-width="0.6"/><path d="M1140.2,532.1 L1140.9,533.1 L1140.2,549.2 L1139.4,548.1Z M1141.9,534.4 L1142.7,535.4 L1141.9,551.5 L1141.1,550.5Z M1143.6,536.7 L1144.4,537.8 L1143.7,553.9 L1142.9,552.8Z M1145.4,539.1 L1146.1,540.1 L1145.4,556.3 L1144.6,555.2Z M1147.1,541.4 L1147.9,542.5 L1147.1,558.7 L1146.4,557.6Z M1148.9,543.8 L1149.7,544.9 L1148.9,561.1 L1148.1,560.0Z M1150.6,546.2 L1151.4,547.3 L1150.7,563.5 L1149.9,562.4Z M1152.4,548.6 L1153.2,549.7 L1152.4,566.0 L1151.6,564.9Z M1154.2,551.0 L1155.0,552.1 L1154.2,568.4 L1153.4,567.3Z M1156.0,553.5 L1156.8,554.6 L1156.0,570.9 L1155.2,569.8Z M1157.8,555.9 L1158.6,557.0 L1157.8,573.4 L1157.0,572.3Z M1159.6,558.4 L1160.5,559.5 L1159.6,575.9 L1158.8,574.8Z M1161.5,560.8 L1162.3,561.9 L1161.5,578.4 L1160.6,577.3Z M1163.3,563.3 L1164.2,564.4 L1163.3,580.9 L1162.5,579.8Z M1165.2,565.8 L1166.0,566.9 L1165.2,583.5 L1164.3,582.3Z M1167.0,568.3 L1167.9,569.4 L1167.0,586.0 L1166.2,584.9Z M1168.9,570.8 L1169.7,572.0 L1168.9,588.6 L1168.0,587.4Z M1170.8,573.4 L1171.6,574.5 L1170.7,591.2 L1169.9,590.0Z M1172.7,575.9 L1173.5,577.1 L1172.6,593.7 L1171.8,592.6Z M1174.6,578.5 L1175.4,579.7 L1174.5,596.4 L1173.7,595.2Z M1176.5,581.1 L1177.4,582.2 L1176.4,599.0 L1175.6,597.8Z M1178.4,583.7 L1179.3,584.8 L1178.4,601.6 L1177.5,600.4Z M1180.3,586.3 L1181.2,587.5 L1180.3,604.3 L1179.4,603.1Z M1182.3,588.9 L1183.2,590.1 L1182.2,606.9 L1181.3,605.7Z M1184.2,591.5 L1185.1,592.7 L1184.2,609.6 L1183.3,608.4Z M1186.2,594.2 L1187.1,595.4 L1186.1,612.3 L1185.2,611.1Z M1188.2,596.9 L1189.1,598.1 L1188.1,615.0 L1187.2,613.8Z M1190.2,599.5 L1191.1,600.8 L1190.1,617.7 L1189.2,616.5Z M1192.2,602.2 L1193.1,603.5 L1192.1,620.5 L1191.2,619.2Z M1194.2,605.0 L1195.1,606.2 L1194.1,623.2 L1193.2,622.0Z M1196.2,607.7 L1197.1,608.9 L1196.1,626.0 L1195.2,624.8Z M1198.2,610.4 L1199.2,611.7 L1198.1,628.8 L1197.2,627.5Z M1200.3,613.2 L1201.2,614.4 L1200.2,631.6 L1199.3,630.3Z M1202.4,616.0 L1203.3,617.2 L1202.2,634.4 L1201.3,633.2Z M1204.4,618.8 L1205.4,620.0 L1204.3,637.3 L1203.4,636.0Z M1206.5,621.6 L1207.4,622.8 L1206.4,640.1 L1205.4,638.8Z M1208.6,624.4 L1209.5,625.7 L1208.5,643.0 L1207.5,641.7Z M1210.7,627.2 L1211.7,628.5 L1210.6,645.9 L1209.6,644.6Z M1212.8,630.1 L1213.8,631.4 L1212.7,648.8 L1211.7,647.5Z M1215.0,633.0 L1215.9,634.3 L1214.8,651.7 L1213.8,650.4Z M1217.1,635.9 L1218.1,637.2 L1216.9,654.6 L1216.0,653.3Z M1219.3,638.8 L1220.2,640.1 L1219.1,657.6 L1218.1,656.3Z M1221.4,641.7 L1222.4,643.0 L1221.2,660.6 L1220.3,659.2Z M1223.6,644.6 L1224.6,646.0 L1223.4,663.6 L1222.4,662.2Z M1225.8,647.6 L1226.8,648.9 L1225.6,666.6 L1224.6,665.2Z M1228.0,650.6 L1229.0,651.9 L1227.8,669.6 L1226.8,668.2Z" fill="#a81212"/>
<polygon points="573.4,726.7 562.4,589.3 564.0,606.1 575.2,745.3" fill="#cc1616" stroke="#cc1616" stroke-width="0.6"/><path d="M573.4,726.7 L573.3,725.1 L575.1,743.7 L575.2,745.3Z M573.1,723.2 L573.0,721.7 L574.8,740.2 L574.9,741.8Z M572.9,719.8 L572.7,718.2 L574.5,736.8 L574.6,738.3Z M572.6,716.4 L572.5,714.8 L574.2,733.3 L574.3,734.9Z M572.3,713.0 L572.2,711.5 L574.0,729.9 L574.1,731.5Z M572.1,709.6 L571.9,708.1 L573.7,726.5 L573.8,728.1Z M571.8,706.3 L571.7,704.8 L573.4,723.2 L573.5,724.7Z M571.5,703.0 L571.4,701.5 L573.1,719.8 L573.3,721.3Z M571.3,699.7 L571.1,698.2 L572.9,716.5 L573.0,718.0Z M571.0,696.4 L570.9,694.9 L572.6,713.2 L572.7,714.6Z M570.7,693.1 L570.6,691.7 L572.3,709.9 L572.5,711.3Z M570.5,689.9 L570.4,688.4 L572.1,706.6 L572.2,708.1Z M570.2,686.7 L570.1,685.2 L571.8,703.3 L571.9,704.8Z M570.0,683.5 L569.9,682.0 L571.6,700.1 L571.7,701.6Z M569.7,680.3 L569.6,678.9 L571.3,696.9 L571.4,698.3Z M569.5,677.1 L569.3,675.7 L571.0,693.7 L571.2,695.1Z M569.2,674.0 L569.1,672.6 L570.8,690.5 L570.9,692.0Z M569.0,670.9 L568.8,669.5 L570.5,687.4 L570.7,688.8Z M568.7,667.8 L568.6,666.4 L570.3,684.3 L570.4,685.7Z M568.5,664.7 L568.4,663.3 L570.0,681.1 L570.2,682.5Z M568.2,661.6 L568.1,660.3 L569.8,678.0 L569.9,679.4Z M568.0,658.6 L567.9,657.2 L569.5,675.0 L569.7,676.4Z M567.7,655.6 L567.6,654.2 L569.3,671.9 L569.4,673.3Z M567.5,652.5 L567.4,651.2 L569.1,668.9 L569.2,670.2Z M567.3,649.6 L567.1,648.2 L568.8,665.8 L568.9,667.2Z M567.0,646.6 L566.9,645.3 L568.6,662.8 L568.7,664.2Z M566.8,643.6 L566.7,642.3 L568.3,659.9 L568.4,661.2Z M566.5,640.7 L566.4,639.4 L568.1,656.9 L568.2,658.2Z M566.3,637.8 L566.2,636.5 L567.9,653.9 L568.0,655.3Z M566.1,634.9 L566.0,633.6 L567.6,651.0 L567.7,652.3Z M565.8,632.0 L565.7,630.7 L567.4,648.1 L567.5,649.4Z M565.6,629.1 L565.5,627.8 L567.2,645.2 L567.3,646.5Z M565.4,626.3 L565.3,625.0 L566.9,642.3 L567.0,643.6Z M565.2,623.4 L565.1,622.2 L566.7,639.4 L566.8,640.7Z M564.9,620.6 L564.8,619.3 L566.5,636.6 L566.6,637.9Z M564.7,617.8 L564.6,616.5 L566.2,633.7 L566.3,635.0Z M564.5,615.0 L564.4,613.8 L566.0,630.9 L566.1,632.2Z M564.3,612.2 L564.2,611.0 L565.8,628.1 L565.9,629.4Z M564.1,609.5 L564.0,608.3 L565.6,625.3 L565.7,626.6Z M563.8,606.7 L563.7,605.5 L565.3,622.6 L565.4,623.8Z M563.6,604.0 L563.5,602.8 L565.1,619.8 L565.2,621.1Z M563.4,601.3 L563.3,600.1 L564.9,617.1 L565.0,618.3Z M563.2,598.6 L563.1,597.4 L564.7,614.4 L564.8,615.6Z M563.0,595.9 L562.9,594.7 L564.5,611.7 L564.6,612.9Z M562.8,593.3 L562.7,592.1 L564.3,609.0 L564.4,610.2Z M562.5,590.6 L562.5,589.4 L564.0,606.3 L564.1,607.5Z" fill="#a81212"/>
<polygon points="1229.1,652.1 1229.4,652.6 1228.2,670.3 1227.9,669.8" fill="#cc1616" stroke="#cc1616" stroke-width="0.6"/>
<polygon points="1229.4,652.6 1229.5,653.1 1228.3,670.8 1228.2,670.3" fill="#cc1616" stroke="#cc1616" stroke-width="0.6"/>
<path d="M1224.6,673.1 L1225.6,672.9 L1226.5,672.6 L1227.2,672.3 L1227.8,671.8 L1228.1,671.4 L1228.3,670.8 L1228.2,670.3 L1227.9,669.8 L1139.4,548.1 L1139.2,547.8 L1138.8,547.6 L1138.4,547.4 L1137.9,547.3 L1137.3,547.1 L1136.8,547.1 L1136.2,547.1 L1135.6,547.1 L567.2,604.3 L566.6,604.4 L566.0,604.6 L565.4,604.8 L564.9,605.0 L564.5,605.3 L564.2,605.6 L564.1,605.9 L564.0,606.1 L575.2,745.3 L575.3,745.9 L575.7,746.4 L576.3,746.9 L577.1,747.3 L578.1,747.6 L579.2,747.7 L580.3,747.8 L581.5,747.7 L586.8,747.1 L586.1,747.1 L585.4,747.0 L584.9,746.8 L584.4,746.5 L584.0,746.2 L583.7,745.9 L583.6,745.5 L579.1,693.7 L579.5,690.2 L581.2,686.7 L584.2,683.4 L588.4,680.3 L593.6,677.6 L599.6,675.3 L606.1,673.7 L612.9,672.6 L1146.8,614.7 L1153.1,614.3 L1159.5,614.5 L1165.9,615.3 L1172.0,616.7 L1177.5,618.5 L1182.3,620.9 L1186.2,623.5 L1188.9,626.5 L1221.4,671.6 L1221.6,672.0 L1221.7,672.3 L1221.6,672.6 L1221.3,672.9 L1221.0,673.2 L1220.5,673.4 L1220.0,673.6Z" fill="url(#yl)" fill-rule="evenodd"/>
<path d="M1188.8,618.5 L1188.2,618.2 L1183.4,615.9 L1182.7,615.6 L1182.0,615.4 L1176.5,613.5 L1175.8,613.3 L1175.0,613.1 L1169.0,611.7 L1168.2,611.6 L1167.3,611.5 L1161.0,610.7 L1160.1,610.6 L1159.3,610.5 L1152.9,610.3 L1152.0,610.3 L1151.2,610.3 L1144.9,610.7 L1144.1,610.8 L612.4,668.2 L611.5,668.3 L604.7,669.4 L603.8,669.5 L602.9,669.7 L596.4,671.4 L595.6,671.7 L594.8,671.9 L588.9,674.2 L588.1,674.5 L587.4,674.8 L582.2,677.5 L581.6,677.9 L581.0,678.3 L576.8,681.3 L576.3,681.7 L575.9,682.2 L572.8,685.5 L572.4,686.0 L572.2,686.4 L570.7,689.3 L575.2,745.3 L575.3,745.9 L575.7,746.4 L576.3,746.9 L577.1,747.3 L578.1,747.6 L579.2,747.7 L580.3,747.8 L581.5,747.7 L586.8,747.1 L586.1,747.1 L585.4,747.0 L584.9,746.8 L584.4,746.5 L584.0,746.2 L583.7,745.9 L583.6,745.5 L579.1,693.7 L579.5,690.2 L581.2,686.7 L584.2,683.4 L588.4,680.3 L593.6,677.6 L599.6,675.3 L606.1,673.7 L612.9,672.6 L1146.8,614.7 L1153.1,614.3 L1159.5,614.5 L1165.9,615.3 L1172.0,616.7 L1177.5,618.5 L1182.3,620.9 L1186.2,623.5 L1188.9,626.5 L1221.4,671.6 L1221.6,672.0 L1221.7,672.3 L1221.6,672.6 L1221.3,672.9 L1221.0,673.2 L1220.5,673.4 L1220.0,673.6 L1224.6,673.1 L1225.6,672.9 L1226.5,672.6 L1227.2,672.3 L1227.8,671.8 L1228.1,671.4 L1228.3,670.8 L1228.2,670.3 L1227.9,669.8 L1192.5,621.1 L1189.3,618.9Z" fill="#16e616" fill-rule="evenodd"/>
<path d="M581.4,745.9 L581.5,746.3 L581.5,746.4 L581.6,746.5 L581.8,746.8 L581.9,746.9 L582.0,747.0 L582.4,747.3 L582.5,747.4 L582.7,747.5 L582.8,747.6 L586.8,747.1 L586.1,747.1 L585.4,747.0 L584.9,746.8 L584.4,746.5 L584.0,746.2 L583.7,745.9 L583.6,745.5 L579.1,693.7 L579.5,690.2 L581.2,686.7 L584.2,683.4 L588.4,680.3 L593.6,677.6 L599.6,675.3 L606.1,673.7 L612.9,672.6 L1146.8,614.7 L1153.1,614.3 L1159.5,614.5 L1165.9,615.3 L1172.0,616.7 L1177.5,618.5 L1182.3,620.9 L1186.2,623.5 L1188.9,626.5 L1221.4,671.6 L1221.6,672.0 L1221.7,672.3 L1221.6,672.6 L1221.3,672.9 L1221.0,673.2 L1220.5,673.4 L1220.0,673.6 L1223.5,673.2 L1223.5,673.1 L1223.6,673.0 L1223.6,672.9 L1223.7,672.6 L1223.8,672.5 L1223.8,672.4 L1223.7,672.0 L1223.7,671.9 L1223.6,671.8 L1223.5,671.5 L1223.4,671.4 L1190.8,626.2 L1190.7,626.2 L1188.0,623.2 L1187.9,623.1 L1187.8,623.1 L1183.9,620.4 L1183.8,620.3 L1183.7,620.2 L1178.9,617.9 L1178.7,617.9 L1178.6,617.8 L1173.0,615.9 L1172.9,615.9 L1172.7,615.9 L1166.6,614.5 L1166.4,614.5 L1166.3,614.4 L1159.9,613.6 L1159.7,613.6 L1159.5,613.6 L1153.0,613.4 L1152.8,613.4 L1152.6,613.4 L1146.3,613.8 L1146.1,613.8 L612.8,671.6 L612.6,671.6 L605.8,672.7 L605.5,672.7 L605.4,672.8 L598.8,674.4 L598.6,674.5 L598.5,674.6 L592.5,676.8 L592.3,676.9 L592.2,676.9 L587.0,679.6 L586.8,679.7 L586.7,679.8 L582.5,682.9 L582.4,683.0 L582.3,683.1 L579.3,686.5 L579.2,686.6 L579.1,686.7 L577.4,690.2 L577.3,690.3 L577.3,690.4 L576.9,693.9 L576.9,694.0 L581.3,745.8Z" fill="#ff1c1c" fill-rule="evenodd"/>
<path d="M1322.1,673.5 L1324.4,672.4 L1326.0,671.0 L1327.0,669.5 L1327.3,667.8 L1326.9,666.1 L1325.9,664.4 L1320.8,658.3 L1315.2,658.9 L1199.0,517.5 L487.7,587.3 L487.7,754.7 L481.0,755.4 L481.0,762.7 L481.3,764.7 L482.5,766.5 L484.3,768.1 L486.8,769.3 L489.8,770.3 L493.3,770.8 L497.0,771.0 L500.9,770.7 L851.9,729.5 L848.0,718.1 L993.1,701.2 L998.5,712.3 L1316.3,674.9 L1319.4,674.4Z M562.5,589.0 L562.6,588.7 L562.9,588.4 L563.3,588.2 L563.8,588.0 L564.4,587.8 L565.0,587.6 L565.6,587.5 L1136.3,531.1 L1136.9,531.0 L1137.5,531.1 L1138.1,531.1 L1138.6,531.2 L1139.1,531.4 L1139.6,531.6 L1139.9,531.8 L1140.2,532.1 L1229.1,652.1 L1229.4,652.6 L1229.5,653.1 L1229.3,653.7 L1229.0,654.1 L1228.4,654.6 L1227.7,654.9 L1226.8,655.2 L1225.8,655.3 L579.8,729.0 L578.6,729.1 L577.4,729.1 L576.3,728.9 L575.4,728.6 L574.6,728.2 L574.0,727.8 L573.6,727.2 L573.4,726.7 L562.4,589.3Z" fill="#ff1c1c" fill-rule="evenodd"/>
<path d="M488.7,752.9 L488.7,755.0 L482.0,755.8 L481.9,762.6 L482.3,764.5 L483.3,766.2 L485.1,767.7 L487.5,768.9 L490.3,769.8 L493.6,770.3 L497.2,770.5 L501.0,770.2 L850.8,729.1 L847.0,717.7 L993.8,700.6 L999.1,711.7 L1315.9,674.5 L1318.9,674.0 L1321.5,673.2 L1323.6,672.1 L1325.2,670.8 L1326.1,669.3 L1326.4,667.7 L1326.1,666.1 L1325.1,664.5 L1320.4,658.8 L1314.8,659.4 L1313.3,657.6 L1314.1,657.5 L1199.0,517.5 L487.7,587.3 L487.7,753.0Z M562.7,588.0 L563.4,587.7 L564.0,587.5 L564.8,587.3 L565.6,587.2 L1136.1,530.8 L1136.8,530.7 L1137.5,530.7 L1138.3,530.8 L1139.0,531.0 L1139.6,531.2 L1140.1,531.4 L1140.6,531.7 L1140.8,532.0 L1229.9,652.0 L1230.2,652.6 L1230.3,653.2 L1230.2,653.8 L1229.7,654.4 L1229.1,654.8 L1228.3,655.2 L1227.2,655.5 L1226.1,655.7 L579.8,729.5 L578.4,729.6 L577.1,729.5 L575.9,729.3 L574.8,729.0 L573.8,728.6 L573.1,728.1 L572.7,727.4 L572.5,726.8 L561.6,589.4 L561.7,589.0 L561.9,588.7 L562.3,588.3Z" fill="#16e616" fill-rule="evenodd"/>
<path d="M494.0,747.9 L497.1,747.6 L497.2,758.4 L490.5,759.2 L490.5,761.4 L490.7,762.6 L491.3,763.6 L492.3,764.4 L493.6,765.0 L495.1,765.5 L496.9,765.8 L498.9,765.9 L501.3,765.7 L841.4,725.9 L837.7,714.6 L999.5,695.8 L1004.9,706.8 L1312.5,670.8 L1314.5,670.5 L1315.9,670.0 L1317.1,669.4 L1317.9,668.7 L1318.5,667.9 L1318.6,667.1 L1318.4,666.2 L1317.8,665.1 L1316.3,663.3 L1310.6,663.9 L1303.3,654.8 L1305.9,654.5 L1194.5,518.0 L493.0,586.8Z M557.5,586.3 L559.1,585.5 L561.1,584.8 L563.2,584.4 L565.0,584.1 L1134.4,528.0 L1136.0,527.9 L1138.1,527.9 L1140.1,528.2 L1142.0,528.6 L1143.7,529.1 L1145.2,529.8 L1146.4,530.5 L1147.1,531.2 L1237.2,651.4 L1237.8,652.5 L1238.0,653.8 L1237.6,655.1 L1236.7,656.3 L1235.3,657.4 L1233.5,658.3 L1231.3,659.0 L1229.2,659.3 L579.7,733.7 L577.2,733.9 L574.2,733.8 L571.5,733.4 L569.1,732.7 L567.1,731.7 L565.6,730.5 L564.6,729.2 L564.3,727.9 L554.4,589.9 L554.6,589.1 L555.1,588.1 L556.1,587.2Z" fill="url(#yl)" fill-rule="evenodd"/>
<polygon points="1200.8,487.2 484.1,555.1 487.7,587.3 1199.0,517.5" fill="#ff1c1c" stroke="#ff1c1c" stroke-width="0.6"/>
<polygon points="1318.3,624.8 1200.8,487.2 1199.0,517.5 1315.2,658.9" fill="#cc1616" stroke="#cc1616" stroke-width="0.6"/><path d="M1318.3,624.8 L1317.2,623.5 L1314.1,657.6 L1315.2,658.9Z M1315.8,621.8 L1314.6,620.5 L1311.6,654.5 L1312.7,655.9Z M1313.3,618.9 L1312.1,617.6 L1309.2,651.5 L1310.3,652.9Z M1310.8,616.0 L1309.7,614.7 L1306.7,648.5 L1307.8,649.9Z M1308.3,613.1 L1307.2,611.8 L1304.3,645.6 L1305.3,646.9Z M1305.8,610.2 L1304.7,608.9 L1301.8,642.6 L1302.9,643.9Z M1303.4,607.3 L1302.3,606.0 L1299.4,639.7 L1300.5,641.0Z M1300.9,604.5 L1299.8,603.2 L1297.0,636.7 L1298.1,638.1Z M1298.5,601.6 L1297.4,600.4 L1294.6,633.8 L1295.7,635.1Z M1296.1,598.8 L1295.0,597.5 L1292.2,631.0 L1293.3,632.3Z M1293.7,596.0 L1292.6,594.7 L1289.9,628.1 L1290.9,629.4Z M1291.3,593.2 L1290.3,592.0 L1287.5,625.2 L1288.6,626.5Z M1289.0,590.4 L1287.9,589.2 L1285.2,622.4 L1286.3,623.7Z M1286.6,587.7 L1285.6,586.5 L1282.9,619.6 L1283.9,620.8Z M1284.3,585.0 L1283.2,583.7 L1280.6,616.8 L1281.6,618.0Z M1282.0,582.2 L1280.9,581.0 L1278.3,614.0 L1279.3,615.2Z M1279.7,579.5 L1278.6,578.3 L1276.0,611.2 L1277.0,612.5Z M1277.4,576.8 L1276.3,575.6 L1273.8,608.5 L1274.8,609.7Z M1275.1,574.2 L1274.0,573.0 L1271.5,605.7 L1272.5,606.9Z M1272.8,571.5 L1271.8,570.3 L1269.3,603.0 L1270.3,604.2Z M1270.5,568.9 L1269.5,567.7 L1267.0,600.3 L1268.0,601.5Z M1268.3,566.2 L1267.3,565.1 L1264.8,597.6 L1265.8,598.8Z M1266.1,563.6 L1265.1,562.5 L1262.6,594.9 L1263.6,596.1Z M1263.9,561.0 L1262.9,559.9 L1260.4,592.2 L1261.4,593.4Z M1261.6,558.4 L1260.7,557.3 L1258.3,589.6 L1259.2,590.8Z M1259.5,555.9 L1258.5,554.7 L1256.1,587.0 L1257.1,588.1Z M1257.3,553.3 L1256.3,552.2 L1253.9,584.3 L1254.9,585.5Z M1255.1,550.8 L1254.1,549.6 L1251.8,581.7 L1252.8,582.9Z M1252.9,548.2 L1252.0,547.1 L1249.7,579.1 L1250.6,580.3Z M1250.8,545.7 L1249.8,544.6 L1247.6,576.6 L1248.5,577.7Z M1248.7,543.2 L1247.7,542.1 L1245.4,574.0 L1246.4,575.2Z M1246.5,540.8 L1245.6,539.6 L1243.4,571.5 L1244.3,572.6Z M1244.4,538.3 L1243.5,537.2 L1241.3,568.9 L1242.2,570.1Z M1242.3,535.8 L1241.4,534.7 L1239.2,566.4 L1240.1,567.5Z M1240.3,533.4 L1239.3,532.3 L1237.1,563.9 L1238.1,565.0Z M1238.2,531.0 L1237.3,529.9 L1235.1,561.4 L1236.0,562.5Z M1236.1,528.5 L1235.2,527.5 L1233.1,558.9 L1234.0,560.1Z M1234.1,526.1 L1233.1,525.1 L1231.0,556.5 L1231.9,557.6Z M1232.0,523.7 L1231.1,522.7 L1229.0,554.0 L1229.9,555.1Z M1230.0,521.4 L1229.1,520.3 L1227.0,551.6 L1227.9,552.7Z M1228.0,519.0 L1227.1,517.9 L1225.0,549.2 L1225.9,550.3Z M1226.0,516.7 L1225.1,515.6 L1223.0,546.7 L1223.9,547.8Z M1224.0,514.3 L1223.1,513.3 L1221.1,544.4 L1222.0,545.4Z M1222.0,512.0 L1221.1,510.9 L1219.1,542.0 L1220.0,543.0Z M1220.0,509.7 L1219.1,508.6 L1217.2,539.6 L1218.0,540.7Z M1218.0,507.4 L1217.2,506.3 L1215.2,537.2 L1216.1,538.3Z M1216.1,505.1 L1215.2,504.1 L1213.3,534.9 L1214.2,535.9Z M1214.2,502.8 L1213.3,501.8 L1211.4,532.5 L1212.2,533.6Z M1212.2,500.5 L1211.4,499.5 L1209.5,530.2 L1210.3,531.3Z M1210.3,498.3 L1209.4,497.3 L1207.6,527.9 L1208.4,529.0Z M1208.4,496.1 L1207.5,495.1 L1205.7,525.6 L1206.5,526.6Z M1206.5,493.8 L1205.6,492.8 L1203.8,523.3 L1204.6,524.4Z M1204.6,491.6 L1203.7,490.6 L1201.9,521.1 L1202.8,522.1Z M1202.7,489.4 L1201.9,488.4 L1200.1,518.8 L1200.9,519.8Z" fill="#a81212"/>
<polygon points="484.1,555.1 483.4,718.1 487.7,754.7 487.7,587.3" fill="#cc1616" stroke="#cc1616" stroke-width="0.6"/><path d="M484.1,555.1 L484.1,556.2 L487.7,588.5 L487.7,587.3Z M484.0,557.7 L484.0,558.8 L487.7,591.2 L487.7,590.0Z M484.0,560.2 L484.0,561.4 L487.7,593.8 L487.7,592.6Z M484.0,562.8 L484.0,564.0 L487.7,596.5 L487.7,595.3Z M484.0,565.4 L484.0,566.6 L487.7,599.2 L487.7,598.0Z M484.0,568.1 L484.0,569.2 L487.7,601.9 L487.7,600.7Z M484.0,570.7 L484.0,571.9 L487.7,604.6 L487.7,603.4Z M484.0,573.4 L484.0,574.6 L487.7,607.3 L487.7,606.1Z M484.0,576.0 L484.0,577.2 L487.7,610.1 L487.7,608.9Z M484.0,578.7 L484.0,579.9 L487.7,612.9 L487.7,611.6Z M484.0,581.4 L484.0,582.6 L487.7,615.6 L487.7,614.4Z M483.9,584.1 L483.9,585.4 L487.7,618.4 L487.7,617.2Z M483.9,586.9 L483.9,588.1 L487.7,621.2 L487.7,620.0Z M483.9,589.6 L483.9,590.8 L487.7,624.1 L487.7,622.8Z M483.9,592.4 L483.9,593.6 L487.7,626.9 L487.7,625.6Z M483.9,595.2 L483.9,596.4 L487.7,629.8 L487.7,628.5Z M483.9,598.0 L483.9,599.2 L487.7,632.7 L487.7,631.4Z M483.9,600.8 L483.9,602.0 L487.7,635.6 L487.7,634.3Z M483.9,603.6 L483.9,604.9 L487.7,638.5 L487.7,637.2Z M483.9,606.4 L483.9,607.7 L487.7,641.4 L487.7,640.1Z M483.9,609.3 L483.8,610.6 L487.7,644.4 L487.7,643.0Z M483.8,612.2 L483.8,613.5 L487.7,647.3 L487.7,646.0Z M483.8,615.1 L483.8,616.4 L487.7,650.3 L487.7,649.0Z M483.8,618.0 L483.8,619.3 L487.7,653.3 L487.7,652.0Z M483.8,620.9 L483.8,622.3 L487.7,656.3 L487.7,655.0Z M483.8,623.9 L483.8,625.2 L487.7,659.4 L487.7,658.0Z M483.8,626.9 L483.8,628.2 L487.7,662.4 L487.7,661.1Z M483.8,629.9 L483.8,631.2 L487.7,665.5 L487.7,664.1Z M483.8,632.9 L483.8,634.2 L487.7,668.6 L487.7,667.2Z M483.8,635.9 L483.7,637.3 L487.7,671.7 L487.7,670.3Z M483.7,638.9 L483.7,640.3 L487.7,674.9 L487.7,673.4Z M483.7,642.0 L483.7,643.4 L487.7,678.0 L487.7,676.6Z M483.7,645.1 L483.7,646.5 L487.7,681.2 L487.7,679.8Z M483.7,648.2 L483.7,649.6 L487.7,684.4 L487.7,682.9Z M483.7,651.3 L483.7,652.7 L487.7,687.6 L487.7,686.1Z M483.7,654.4 L483.7,655.9 L487.7,690.8 L487.7,689.4Z M483.7,657.6 L483.7,659.0 L487.7,694.1 L487.7,692.6Z M483.7,660.8 L483.6,662.2 L487.7,697.3 L487.7,695.9Z M483.6,664.0 L483.6,665.4 L487.7,700.6 L487.7,699.2Z M483.6,667.2 L483.6,668.7 L487.7,704.0 L487.7,702.5Z M483.6,670.5 L483.6,671.9 L487.7,707.3 L487.7,705.8Z M483.6,673.7 L483.6,675.2 L487.7,710.6 L487.7,709.1Z M483.6,677.0 L483.6,678.5 L487.7,714.0 L487.7,712.5Z M483.6,680.3 L483.6,681.8 L487.7,717.4 L487.7,715.9Z M483.6,683.6 L483.6,685.1 L487.7,720.8 L487.7,719.3Z M483.6,687.0 L483.5,688.5 L487.7,724.3 L487.7,722.7Z M483.5,690.4 L483.5,691.9 L487.7,727.7 L487.7,726.2Z M483.5,693.7 L483.5,695.3 L487.7,731.2 L487.7,729.7Z M483.5,697.2 L483.5,698.7 L487.7,734.7 L487.7,733.2Z M483.5,700.6 L483.5,702.1 L487.7,738.3 L487.7,736.7Z M483.5,704.1 L483.5,705.6 L487.7,741.8 L487.7,740.2Z M483.5,707.5 L483.5,709.1 L487.7,745.4 L487.7,743.8Z M483.5,711.0 L483.5,712.6 L487.7,749.0 L487.7,747.4Z M483.4,714.6 L483.4,716.2 L487.7,752.6 L487.7,751.0Z" fill="#a81212"/>
<polygon points="1323.9,624.2 1318.3,624.8 1315.2,658.9 1320.8,658.3" fill="#ff1c1c" stroke="#ff1c1c" stroke-width="0.6"/>
<polygon points="483.4,718.1 476.7,718.9 481.0,755.4 487.7,754.7" fill="#ff1c1c" stroke="#ff1c1c" stroke-width="0.6"/>
<polygon points="485.5,567.5 1200.1,498.8 1199.1,517.7 1196.3,521.3 1188.3,518.7 1185.7,522.4 1178.8,520.6 1173.5,524.6 1162.9,521.8 1159.3,524.6 1151.7,522.3 1148.5,525.5 1141.9,524.3 1136.4,528.3 1125.5,525.0 1120.1,528.6 1111.1,527.2 1106.7,531.4 1096.7,527.7 1091.5,532.2 1081.5,529.8 1075.8,532.6 1066.9,530.6 1063.5,535.9 1054.5,532.5 1048.2,535.6 1038.9,534.0 1033.2,538.7 1022.8,535.5 1016.6,539.1 1007.1,537.0 1001.4,539.9 993.5,538.8 988.3,540.8 981.5,539.8 977.8,542.5 971.4,540.5 966.1,543.8 957.7,541.5 950.9,545.5 941.0,543.7 936.6,546.6 929.9,545.0 924.8,547.8 917.6,546.4 911.4,548.6 903.3,546.9 900.1,551.5 893.1,547.9 887.2,551.6 878.8,549.6 874.1,552.1 867.9,551.3 861.9,555.8 852.9,552.9 845.6,554.8 837.4,554.4 832.6,558.2 825.3,555.5 819.8,559.0 811.9,555.9 804.8,559.3 795.7,557.3 790.1,561.3 782.4,558.9 774.4,561.8 765.0,560.4 761.1,565.3 754.6,561.6 748.8,564.5 741.8,563.0 733.6,566.4 724.0,564.2 719.4,567.6 713.4,565.4 706.2,568.6 698.0,567.1 692.1,572.7 684.0,568.8 679.2,573.3 672.9,570.6 666.7,573.7 659.3,571.1 653.6,573.7 647.0,572.1 641.0,577.4 633.4,573.8 625.3,576.5 616.5,575.0 610.7,578.5 604.2,577.2 598.3,579.5 591.9,578.4 586.8,581.8 580.9,578.8 572.2,584.3 562.6,581.1 555.0,585.5 546.8,581.7 539.7,585.5 532.4,584.3 523.7,589.1 514.7,585.6 508.2,590.3 501.4,587.2 493.5,590.9 487.7,587.3" fill="url(#bl)" />
<polygon points="515.4,599.1 515.7,608.5 517.7,627.2 517.4,617.7" fill="#b71414" stroke="#b71414" stroke-width="0.6"/>
<polygon points="515.7,608.5 504.3,609.7 506.3,628.4 517.7,627.2" fill="#ff1c1c" stroke="#ff1c1c" stroke-width="0.6"/>
<polygon points="504.3,609.7 504.4,619.3 506.5,638.1 506.3,628.4" fill="#b71414" stroke="#b71414" stroke-width="0.6"/>
<polygon points="504.4,619.3 485.5,621.2 487.7,640.1 506.5,638.1" fill="#ff1c1c" stroke="#ff1c1c" stroke-width="0.6"/>
<path d="M515.4,599.1 L485.6,602.1 L485.5,621.2 L504.4,619.3 L504.3,609.7 L515.7,608.5Z" fill="#16e616" fill-rule="evenodd"/>
<path d="M509.3,602.5 L491.9,604.2 L491.9,617.7 L498.0,617.0 L497.9,607.5 L509.3,606.3Z" fill="#dede1c" fill-rule="evenodd"/>
<polygon points="517.4,666.4 517.7,677.3 519.8,697.0 519.5,685.9" fill="#b71414" stroke="#b71414" stroke-width="0.6"/>
<polygon points="517.7,677.3 505.5,678.6 507.7,698.4 519.8,697.0" fill="#ff1c1c" stroke="#ff1c1c" stroke-width="0.6"/>
<polygon points="505.5,678.6 505.7,689.9 507.9,709.8 507.7,698.4" fill="#b71414" stroke="#b71414" stroke-width="0.6"/>
<polygon points="505.7,689.9 485.4,692.1 487.7,712.0 507.9,709.8" fill="#ff1c1c" stroke="#ff1c1c" stroke-width="0.6"/>
<path d="M517.4,666.4 L485.4,669.8 L485.4,692.1 L505.7,689.9 L505.5,678.6 L517.7,677.3Z" fill="#16e616" fill-rule="evenodd"/>
<path d="M510.8,670.2 L492.2,672.2 L492.2,688.0 L498.8,687.3 L498.7,676.2 L510.9,674.8Z" fill="#dede1c" fill-rule="evenodd"/>
<polygon points="1230.3,536.6 1219.9,537.6 1218.8,555.3 1229.2,554.2" fill="#ff1c1c" stroke="#ff1c1c" stroke-width="0.6"/>
<polygon points="1209.4,547.6 1196.3,531.3 1195.2,548.8 1208.3,565.4" fill="#b71414" stroke="#b71414" stroke-width="0.6"/>
<polygon points="1226.7,545.9 1209.4,547.6 1208.3,565.4 1225.5,563.6" fill="#ff1c1c" stroke="#ff1c1c" stroke-width="0.6"/>
<path d="M1223.6,528.6 L1196.3,531.3 L1209.4,547.6 L1226.7,545.9 L1219.9,537.6 L1230.3,536.6Z" fill="#16e616" fill-rule="evenodd"/>
<path d="M1220.2,531.4 L1203.5,533.1 L1212.9,544.6 L1219.2,544.0 L1212.5,535.8 L1223.0,534.7Z" fill="#dede1c" fill-rule="evenodd"/>
<polygon points="1279.5,595.1 1268.4,596.3 1267.0,614.9 1278.0,613.6" fill="#ff1c1c" stroke="#ff1c1c" stroke-width="0.6"/>
<polygon points="1257.9,607.8 1242.7,589.0 1241.4,607.4 1256.5,626.5" fill="#b71414" stroke="#b71414" stroke-width="0.6"/>
<polygon points="1276.2,605.8 1257.9,607.8 1256.5,626.5 1274.8,624.5" fill="#ff1c1c" stroke="#ff1c1c" stroke-width="0.6"/>
<path d="M1271.7,585.9 L1242.7,589.0 L1257.9,607.8 L1276.2,605.8 L1268.4,596.3 L1279.5,595.1Z" fill="#16e616" fill-rule="evenodd"/>
<path d="M1268.3,589.1 L1250.6,591.0 L1261.5,604.4 L1268.2,603.7 L1260.5,594.2 L1271.5,593.0Z" fill="#dede1c" fill-rule="evenodd"/>
<path d="M1196.9,476.8 L1195.1,475.8 L1192.9,474.9 L1190.4,474.1 L1187.6,473.6 L1184.7,473.3 L1181.8,473.2 L1178.9,473.4 L495.0,536.9 L491.8,537.3 L488.7,538.0 L485.9,538.9 L483.3,540.0 L481.3,541.2 L479.7,542.5 L478.8,543.9 L478.4,545.3 L478.3,555.6 L478.3,555.6 L476.7,718.9 L483.4,718.1 L484.1,555.1 L1200.8,487.2 L1318.3,624.8 L1323.9,624.2 L1205.7,486.7 L1205.7,486.7 L1198.1,477.9Z" fill="#ff1c1c" fill-rule="evenodd"/>
<path d="M1198.1,477.9 L1196.9,476.8 L1195.1,475.8 L1192.9,474.9 L1190.4,474.1 L1187.6,473.6 L1184.7,473.3 L1181.8,473.2 L1178.9,473.4 L495.0,536.9 L491.8,537.3 L488.7,538.0 L485.9,538.9 L483.3,540.0 L481.3,541.2 L479.7,542.5 L478.8,543.9 L478.4,545.3 L478.3,555.6 L1205.7,486.7Z" fill="#ff1c1c" fill-rule="evenodd"/>
<path d="M1197.5,478.0 L1196.2,476.9 L1194.6,475.9 L1192.5,475.1 L1190.1,474.4 L1187.4,473.9 L1184.7,473.6 L1181.9,473.5 L1179.1,473.7 L495.1,537.2 L492.0,537.6 L489.0,538.3 L486.3,539.1 L483.9,540.2 L481.9,541.3 L480.5,542.6 L479.5,543.9 L479.2,545.2 L479.1,555.2 L1204.8,486.5Z" fill="#16e616" fill-rule="evenodd"/>
<path d="M1188.6,479.0 L1188.0,478.5 L1187.4,478.1 L1186.7,477.9 L1185.9,477.6 L1185.0,477.5 L1184.1,477.4 L1183.2,477.3 L1181.8,477.4 L495.6,541.5 L494.0,541.7 L493.1,541.9 L492.2,542.2 L491.4,542.5 L490.7,542.9 L490.2,543.3 L489.9,543.8 L489.8,544.5 L489.8,549.8 L1192.5,483.6Z" fill="url(#yl2)" fill-rule="evenodd"/>
<path d="M479.1,717.4 L481.1,717.2 L482.0,556.1 L480.3,556.3Z" fill="#b81212" fill-rule="evenodd"/>
<path d="M1204.6,487.6 L1203.2,487.8 L1319.5,623.6 L1321.1,623.4Z" fill="#b81212" fill-rule="evenodd"/>
<polygon points="1327.3,667.8 1327.0,669.5 1322.4,718.5 1322.8,716.8" fill="#e41919" stroke="#e41919" stroke-width="0.6"/>
<polygon points="1327.0,669.5 1326.0,671.0 1321.5,720.1 1322.4,718.5" fill="#ec1919" stroke="#ec1919" stroke-width="0.6"/>
<polygon points="1326.0,671.0 1324.4,672.4 1319.8,721.5 1321.5,720.1" fill="#f31a1a" stroke="#f31a1a" stroke-width="0.6"/>
<polygon points="1324.4,672.4 1322.1,673.5 1317.6,722.7 1319.8,721.5" fill="#f81b1b" stroke="#f81b1b" stroke-width="0.6"/>
<polygon points="1322.1,673.5 1319.4,674.4 1314.9,723.6 1317.6,722.7" fill="#fc1b1b" stroke="#fc1b1b" stroke-width="0.6"/>
<polygon points="1319.4,674.4 1316.3,674.9 1311.8,724.1 1314.9,723.6" fill="#fe1b1b" stroke="#fe1b1b" stroke-width="0.6"/>
<polygon points="1316.3,674.9 998.5,712.3 997.9,762.8 1311.8,724.1" fill="#ff1c1c" stroke="#ff1c1c" stroke-width="0.6"/>
<polygon points="998.5,712.3 993.1,701.2 992.6,751.3 997.9,762.8" fill="#cc1616" stroke="#cc1616" stroke-width="0.6"/>
<polygon points="993.1,701.2 848.0,718.1 849.3,768.8 992.6,751.3" fill="#ff1c1c" stroke="#ff1c1c" stroke-width="0.6"/>
<polygon points="481.3,764.7 481.0,762.7 487.2,815.0 487.6,817.0" fill="#d01616" stroke="#d01616" stroke-width="0.6"/>
<polygon points="482.5,766.5 481.3,764.7 487.6,817.0 488.7,818.8" fill="#da1818" stroke="#da1818" stroke-width="0.6"/>
<polygon points="484.3,768.1 482.5,766.5 488.7,818.8 490.5,820.5" fill="#e41919" stroke="#e41919" stroke-width="0.6"/>
<polygon points="486.8,769.3 484.3,768.1 490.5,820.5 493.0,821.8" fill="#ec1919" stroke="#ec1919" stroke-width="0.6"/>
<polygon points="489.8,770.3 486.8,769.3 493.0,821.8 496.0,822.8" fill="#f31a1a" stroke="#f31a1a" stroke-width="0.6"/>
<polygon points="493.3,770.8 489.8,770.3 496.0,822.8 499.4,823.3" fill="#f81b1b" stroke="#f81b1b" stroke-width="0.6"/>
<polygon points="497.0,771.0 493.3,770.8 499.4,823.3 503.1,823.5" fill="#fc1b1b" stroke="#fc1b1b" stroke-width="0.6"/>
<polygon points="500.9,770.7 497.0,771.0 503.1,823.5 506.9,823.2" fill="#fe1b1b" stroke="#fe1b1b" stroke-width="0.6"/>
<polygon points="851.9,729.5 500.9,770.7 506.9,823.2 853.1,780.6" fill="#ff1c1c" stroke="#ff1c1c" stroke-width="0.6"/>
</svg><div id="ui" style="position:absolute;left:0;top:0;width:1903px;height:967px;will-change:transform"><div class="a" style="left:0;top:0;width:1903px;height:66px;background:#191919"></div><svg style="left:25.800px;top:10px" width="22.500" height="15.200" viewBox="0 0 22.500 15.200"><g fill="#fff"><rect x="0" y="10.400" width="4.700" height="4.700" rx="0.900"/><rect x="4.500" y="0" width="4.700" height="10.800" rx="1"/><rect x="9" y="10.400" width="4.600" height="4.700" rx="0.900"/><rect x="13.400" y="0" width="4.600" height="10.800" rx="1"/><rect x="17.800" y="10.400" width="4.600" height="4.700" rx="0.900"/></g></svg><span class="t" style="left:52.6px;top:9.5px;font-size:18px;line-height:18px;color:#fff;letter-spacing:-0.202px;-webkit-text-stroke:0.5px #fff;">UltiMaker Cura</span><span class="t" style="left:798.2px;top:11.9px;font-size:14.5px;line-height:14.5px;color:#fff;letter-spacing:-0.976px;">PREPARE</span><div class="a" style="left:890px;top:6px;width:111px;height:24px;background:#fff;border-radius:2px"></div><span class="t" style="left:914.4px;top:11.9px;font-size:14.5px;line-height:14.5px;color:#191919;letter-spacing:-0.668px;">PREVIEW</span><span class="t" style="left:1031.4px;top:11.9px;font-size:14.5px;line-height:14.5px;color:#fff;letter-spacing:0.300px;">MONITOR</span><div class="a" style="left:1727px;top:6px;width:78px;height:24px;border:1px solid #fff;border-radius:2px"></div><span class="t" style="left:1731.7px;top:11.3px;font-size:13px;line-height:13px;color:#fff;letter-spacing:-0.228px;">Marketplace</span><svg style="left:1820.3px;top:9px" width="18" height="18" viewBox="0 0 18 18"><rect x="0.0" y="0.0" width="4.6" height="4.6" rx="1.2" fill="#fff"/><rect x="0.0" y="6.6" width="4.6" height="4.6" rx="1.2" fill="#fff"/><rect x="0.0" y="13.2" width="4.6" height="4.6" rx="1.2" fill="#fff"/><rect x="6.6" y="0.0" width="4.6" height="4.6" rx="1.2" fill="#fff"/><rect x="6.6" y="6.6" width="4.6" height="4.6" rx="1.2" fill="#fff"/><rect x="6.6" y="13.2" width="4.6" height="4.6" rx="1.2" fill="#fff"/><rect x="13.2" y="0.0" width="4.6" height="4.6" rx="1.2" fill="#fff"/><rect x="13.2" y="6.6" width="4.6" height="4.6" rx="1.2" fill="#fff"/><rect x="13.2" y="13.2" width="4.6" height="4.6" rx="1.2" fill="#fff"/></svg><div class="a" style="left:1853px;top:6px;width:46px;height:24px;border:1px solid #fff;border-radius:2px"></div><span class="t" style="left:1857.3px;top:11.3px;font-size:13px;line-height:13px;color:#fff;letter-spacing:-0.393px;">Sign in</span><div class="a" style="left:39px;top:42px;width:1822px;height:48px;background:#202020;border:1px solid #7a7a7a;border-radius:3px"></div><div class="a" style="left:494px;top:43px;width:1px;height:46px;background:#7a7a7a"></div><div class="a" style="left:1405px;top:43px;width:455px;height:46px;background:#3a3a3a;border-left:1px solid #7a7a7a;border-radius:0 2px 2px 0"></div><span class="t" style="left:51.3px;top:59.3px;font-size:15px;line-height:15px;color:#8a8a8a;letter-spacing:0.182px;">View type</span><span class="t" style="left:130.3px;top:59.3px;font-size:15px;line-height:15px;color:#fff;letter-spacing:0.150px;">Layer view</span><svg style="left:472.0px;top:63.0px" width="10" height="7" viewBox="0 0 10 7"><path d="M0.8 1 L5 5.3 L9.200 1" fill="none" stroke="#fff" stroke-width="1.5"/></svg><span class="t" style="left:506.1px;top:59.3px;font-size:15px;line-height:15px;color:#8a8a8a;letter-spacing:0.221px;">Color scheme</span><span class="t" style="left:614.4px;top:59.3px;font-size:15px;line-height:15px;color:#fff;letter-spacing:0.113px;">Line Type</span><svg style="left:1383.0px;top:63.0px" width="10" height="7" viewBox="0 0 10 7"><path d="M0.8 1 L5 5.3 L9.200 1" fill="none" stroke="#fff" stroke-width="1.5"/></svg><svg style="left:1419.5px;top:55px" width="25" height="22" viewBox="0 0 25 22"><g stroke="#fff" stroke-width="1.9" fill="#3a3a3a"><path d="M0 3.800H25M0 11H25M0 18.200H25" fill="none"/><circle cx="14.7" cy="3.800" r="2.600"/><circle cx="19" cy="11" r="2.600"/><circle cx="8.500" cy="18.200" r="2.600"/></g></svg><span class="t" style="left:1453.9px;top:59.6px;font-size:14.5px;line-height:14.5px;color:#fff;letter-spacing:0.305px;">19.12.23 - D...ity - 0.16mm</span><svg style="left:1651.8px;top:56.7px" width="18.2" height="18.2" viewBox="0 0 18 18"><rect width="18" height="18" rx="2.500" fill="#fff"/><g fill="#3a3a3a"><path d="M5.400 1.600 L8.700 5.400 L5.400 9.200 L2.100 5.400Z M12.600 1.600 L15.900 5.400 L12.600 9.200 L9.300 5.400Z M5.400 8.800 L8.700 12.600 L5.400 16.400 L2.100 12.600Z M12.600 8.800 L15.900 12.600 L12.600 16.400 L9.300 12.600Z"/></g></svg><span class="t" style="left:1679.3px;top:59.6px;font-size:14.5px;line-height:14.5px;color:#fff;letter-spacing:-0.110px;">30%</span><svg style="left:1719.8px;top:55.9px" width="18.4" height="19" viewBox="0 0 18.4 19"><path d="M9.200 1 L16 7.800 L9.200 13.600 L2.400 7.800Z" fill="none" stroke="#fff" stroke-width="1.700" stroke-linejoin="round"/><path d="M1 10.500V19M4.800 14V19M9.200 16V19M13.600 14V19M17.400 10.500V19" stroke="#fff" stroke-width="1.700" fill="none"/></svg><span class="t" style="left:1747.6px;top:59.6px;font-size:14.5px;line-height:14.5px;color:#fff;letter-spacing:0.078px;">On</span><svg style="left:1777.8px;top:55.9px" width="18.4" height="19" viewBox="0 0 18.4 19"><path d="M9.200 0V10M4.800 6 L9.200 10.400 L13.600 6M1.500 9V14.300H16.900V9" fill="none" stroke="#fff" stroke-width="1.800"/><path d="M0 18H18.400" stroke="#fff" stroke-width="1.800" stroke-dasharray="2.300 1.700" fill="none"/></svg><span class="t" style="left:1805.6px;top:59.6px;font-size:14.5px;line-height:14.5px;color:#fff;letter-spacing:-0.598px;">...</span><svg style="left:1838.2px;top:62.8px" width="10" height="7" viewBox="0 0 10 7"><path d="M0.8 1 L5 5.3 L9.200 1" fill="none" stroke="#fff" stroke-width="1.5"/></svg><div class="a" style="left:1405px;top:98px;width:458px;height:580px;background:#1f1f1f;border:1px solid #6e6e6e;border-radius:3px 3px 0 0"></div><div class="a" style="left:1405px;top:677px;width:458px;height:8px;background:#5c5c5c;border-radius:0 0 3px 3px"></div><span class="t" style="left:1627.0px;top:671.7px;font-size:11px;line-height:11px;color:#9a9a9a;letter-spacing:0.943px;">...</span><div class="a" style="left:1406px;top:133px;width:456px;height:1px;background:#6e6e6e"></div><span class="t" style="left:1417.6px;top:109.1px;font-size:15.5px;line-height:15.5px;color:#fff;letter-spacing:0.199px;">Print settings</span><svg style="left:1840.5px;top:111.8px" width="9" height="9" viewBox="0 0 9 9"><path d="M1 1L8 8M8 1L1 8" stroke="#fff" stroke-width="1.300"/></svg><span class="t" style="left:1418.3px;top:154.1px;font-size:15.5px;line-height:15.5px;color:#fff;letter-spacing:0.038px;">Profile</span><div class="a" style="left:1514px;top:147px;width:276px;height:29px;background:#2f2f2f;border-bottom:1px solid #c8c8c8;border-radius:2px 2px 0 0"></div><span class="t" style="left:1526.0px;top:155.3px;font-size:13px;line-height:13px;color:#fff;letter-spacing:-0.264px;">19.12.23</span><span class="t" style="left:1574.5px;top:155.3px;font-size:13px;line-height:13px;color:#b4b4b4;letter-spacing:-0.274px;"> - Dynamic Quality - 0.16mm</span><svg style="left:1741.2px;top:155.600px" width="12" height="12" viewBox="0 0 24 24"><path fill="#fff" d="M12 1.500l3.100 7.200 7.700.7-5.800 5.100 1.700 7.600L12 18.100 5.300 22.100 7 14.500 1.200 9.400l7.700-.7z"/></svg><svg style="left:1767.0px;top:158.6px" width="10" height="7" viewBox="0 0 10 7"><path d="M0.8 1 L5 5.3 L9.200 1" fill="none" stroke="#fff" stroke-width="1.5"/></svg><svg style="left:1803.5px;top:153.5px" width="15" height="17" viewBox="0 0 16 18"><path d="M8 3.600 A6.400 6.400 0 1 1 1.800 8.800" fill="none" stroke="#1a74e8" stroke-width="1.800"/><path d="M8.600 0.300 L4.600 3.700 L8.600 7.200" fill="none" stroke="#1a74e8" stroke-width="1.800"/></svg><svg style="left:1833.5px;top:154.300px" width="15" height="15" viewBox="0 0 15 15"><path d="M1 2.200 Q1 1 2.200 1 H10.800 L14 4.200 V12.800 Q14 14 12.800 14 H2.200 Q1 14 1 12.800Z" fill="none" stroke="#1a74e8" stroke-width="1.800"/><path d="M4.200 1.500V5H10V1.500 M4 14V9.200H11V14" fill="none" stroke="#1a74e8" stroke-width="1.700"/></svg><div class="a" style="left:1430px;top:187px;width:378px;height:24px;background:#3a3a3a;border-bottom:1px solid #bdbdbd;border-radius:2px 2px 0 0"></div><svg style="left:1443.5px;top:191.500px" width="16" height="16" viewBox="0 0 16 16"><circle cx="9.600" cy="6.200" r="4.600" fill="none" stroke="#fff" stroke-width="1.600"/><path d="M6.400 9.600L1 15" stroke="#fff" stroke-width="1.700"/></svg><span class="t" style="left:1472.1px;top:193.2px;font-size:12.5px;line-height:12.5px;font-style:italic;color:#8c8c8c;letter-spacing:-0.445px;">Search settings</span><div class="a" style="left:1817px;top:193px;width:18px;height:2px;background:#fff"></div><div class="a" style="left:1817px;top:201px;width:18px;height:2px;background:#fff"></div><div class="a" style="left:1817px;top:209px;width:18px;height:2px;background:#fff"></div><div class="a" style="left:1833px;top:231px;width:9px;height:54px;background:#6e6e6e;border-radius:4.500px"></div><div class="a" style="left:1430px;top:229px;width:395px;height:1px;background:#8a8a8a"></div><svg style="left:1437.8px;top:237px" width="14.5" height="14" viewBox="0 0 14.500 14"><path fill="#fff" d="M0 0h4v1.900H0z M0 4h8.700v2.700H0z M0 8.700h14.300v5H0z"/></svg><span class="t" style="left:1460.7px;top:237.0px;font-size:14px;line-height:14px;font-weight:700;color:#fff;letter-spacing:0.604px;">Quality</span><svg style="left:1808.3px;top:240.5px" width="10" height="7" viewBox="0 0 10 7"><path d="M0.8 1 L5 5.3 L9.200 1" fill="none" stroke="#fff" stroke-width="1.5"/></svg><span class="t" style="left:1439.2px;top:267.1px;font-size:13px;line-height:13px;color:#fff;letter-spacing:-0.218px;">Layer Height</span><div class="a" style="left:1693px;top:262px;width:132px;height:24px;background:#3a3a3a;border-bottom:1px solid #d2d2d2;border-radius:2px 2px 0 0"></div><span class="t" style="left:1699.0px;top:267.1px;font-size:13px;line-height:13px;color:#fff;letter-spacing:-0.553px;">0.16</span><span class="t" style="left:1797.1px;top:267.1px;font-size:13px;line-height:13px;color:#9c9c9c;letter-spacing:-0.136px;">mm</span><svg style="left:1665.5px;top:266.3px" width="15" height="15" viewBox="0 0 15 15"><g fill="none" stroke="#fff" stroke-width="1.700" stroke-linecap="round"><path d="M6.300 4.600 L8.300 2.600 A2.900 2.900 0 0 1 12.400 6.700 L10.400 8.700 A2.900 2.900 0 0 1 6.800 9"/><path d="M8.700 10.400 L6.700 12.400 A2.900 2.900 0 0 1 2.600 8.300 L4.600 6.300 A2.900 2.900 0 0 1 8.200 6"/></g></svg><span class="t" style="left:1439.2px;top:297.1px;font-size:13px;line-height:13px;font-style:italic;color:#fff;letter-spacing:-0.339px;">Initial Layer Height</span><div class="a" style="left:1693px;top:292px;width:132px;height:24px;background:#3a3a3a;border-bottom:1px solid #d2d2d2;border-radius:2px 2px 0 0"></div><span class="t" style="left:1699.0px;top:297.1px;font-size:13px;line-height:13px;color:#fff;letter-spacing:-0.459px;">0.2</span><span class="t" style="left:1797.1px;top:297.1px;font-size:13px;line-height:13px;color:#9c9c9c;letter-spacing:-0.136px;">mm</span><svg style="left:1638.3px;top:296.3px" width="15" height="15" viewBox="0 0 15 15"><g fill="none" stroke="#fff" stroke-width="1.700" stroke-linecap="round"><path d="M6.300 4.600 L8.300 2.600 A2.900 2.900 0 0 1 12.400 6.700 L10.400 8.700 A2.900 2.900 0 0 1 6.800 9"/><path d="M8.700 10.400 L6.700 12.400 A2.900 2.900 0 0 1 2.600 8.300 L4.600 6.300 A2.900 2.900 0 0 1 8.200 6"/></g></svg><svg style="left:1666.0px;top:295.8px" width="13.5" height="15.5" viewBox="0 0 16 18"><path d="M8 3.600 A6.400 6.400 0 1 1 1.800 8.800" fill="none" stroke="#1a74e8" stroke-width="1.800"/><path d="M8.600 0.300 L4.600 3.700 L8.600 7.200" fill="none" stroke="#1a74e8" stroke-width="1.800"/></svg><span class="t" style="left:1439.2px;top:327.1px;font-size:13px;line-height:13px;color:#fff;letter-spacing:-0.212px;">Line Width</span><div class="a" style="left:1693px;top:322px;width:132px;height:24px;background:#3a3a3a;border-bottom:1px solid #d2d2d2;border-radius:2px 2px 0 0"></div><span class="t" style="left:1699.0px;top:327.1px;font-size:13px;line-height:13px;color:#fff;letter-spacing:-0.459px;">0.4</span><span class="t" style="left:1797.1px;top:327.1px;font-size:13px;line-height:13px;color:#9c9c9c;letter-spacing:-0.136px;">mm</span><span class="t" style="left:1451.2px;top:357.1px;font-size:13px;line-height:13px;color:#fff;letter-spacing:-0.262px;">Wall Line Width</span><div class="a" style="left:1693px;top:352px;width:132px;height:24px;background:#3a3a3a;border-bottom:1px solid #d2d2d2;border-radius:2px 2px 0 0"></div><span class="t" style="left:1699.0px;top:357.1px;font-size:13px;line-height:13px;color:#fff;letter-spacing:-0.459px;">0.4</span><span class="t" style="left:1797.1px;top:357.1px;font-size:13px;line-height:13px;color:#9c9c9c;letter-spacing:-0.136px;">mm</span><span class="t" style="left:1463.2px;top:387.1px;font-size:13px;line-height:13px;color:#fff;letter-spacing:-0.183px;">Outer Wall Line Width</span><div class="a" style="left:1693px;top:382px;width:132px;height:24px;background:#3a3a3a;border-bottom:1px solid #d2d2d2;border-radius:2px 2px 0 0"></div><span class="t" style="left:1699.0px;top:387.1px;font-size:13px;line-height:13px;color:#fff;letter-spacing:-0.459px;">0.4</span><span class="t" style="left:1797.1px;top:387.1px;font-size:13px;line-height:13px;color:#9c9c9c;letter-spacing:-0.136px;">mm</span><span class="t" style="left:1463.2px;top:417.1px;font-size:13px;line-height:13px;color:#fff;letter-spacing:-0.218px;">Inner Wall(s) Line Width</span><div class="a" style="left:1693px;top:412px;width:132px;height:24px;background:#3a3a3a;border-bottom:1px solid #d2d2d2;border-radius:2px 2px 0 0"></div><span class="t" style="left:1699.0px;top:417.1px;font-size:13px;line-height:13px;color:#fff;letter-spacing:-0.459px;">0.4</span><span class="t" style="left:1797.1px;top:417.1px;font-size:13px;line-height:13px;color:#9c9c9c;letter-spacing:-0.136px;">mm</span><span class="t" style="left:1451.2px;top:447.1px;font-size:13px;line-height:13px;color:#fff;letter-spacing:-0.076px;">Top/Bottom Line Width</span><div class="a" style="left:1693px;top:442px;width:132px;height:24px;background:#3a3a3a;border-bottom:1px solid #d2d2d2;border-radius:2px 2px 0 0"></div><span class="t" style="left:1699.0px;top:447.1px;font-size:13px;line-height:13px;color:#fff;letter-spacing:-0.459px;">0.4</span><span class="t" style="left:1797.1px;top:447.1px;font-size:13px;line-height:13px;color:#9c9c9c;letter-spacing:-0.136px;">mm</span><span class="t" style="left:1451.2px;top:477.1px;font-size:13px;line-height:13px;color:#fff;letter-spacing:-0.056px;">Infill Line Width</span><div class="a" style="left:1693px;top:472px;width:132px;height:24px;background:#3a3a3a;border-bottom:1px solid #d2d2d2;border-radius:2px 2px 0 0"></div><span class="t" style="left:1699.0px;top:477.1px;font-size:13px;line-height:13px;color:#fff;letter-spacing:-0.459px;">0.4</span><span class="t" style="left:1797.1px;top:477.1px;font-size:13px;line-height:13px;color:#9c9c9c;letter-spacing:-0.136px;">mm</span><span class="t" style="left:1439.2px;top:507.1px;font-size:13px;line-height:13px;color:#fff;letter-spacing:-0.138px;">Initial Layer Line Width</span><div class="a" style="left:1693px;top:502px;width:132px;height:24px;background:#3a3a3a;border-bottom:1px solid #d2d2d2;border-radius:2px 2px 0 0"></div><span class="t" style="left:1699.0px;top:507.1px;font-size:13px;line-height:13px;color:#fff;letter-spacing:-0.489px;">100.0</span><span class="t" style="left:1809.0px;top:507.1px;font-size:13px;line-height:13px;color:#9c9c9c;letter-spacing:-2.062px;">%</span><div class="a" style="left:1430px;top:529px;width:395px;height:1px;background:#8a8a8a"></div><svg style="left:1437.8px;top:536.8px" width="14" height="14" viewBox="0 0 14 14"><rect x="0.800" y="0.800" width="12.400" height="12.400" rx="2" fill="none" stroke="#fff" stroke-width="1.400"/><g fill="#fff"><rect x="3.300" y="3.300" width="2" height="2"/><rect x="6" y="3.300" width="2" height="2"/><rect x="8.700" y="3.300" width="2" height="2"/><rect x="3.300" y="6" width="2" height="2"/><rect x="6" y="6" width="2" height="2"/><rect x="8.700" y="6" width="2" height="2"/><rect x="3.300" y="8.700" width="2" height="2"/><rect x="6" y="8.700" width="2" height="2"/><rect x="8.700" y="8.700" width="2" height="2"/></g></svg><span class="t" style="left:1460.3px;top:537.0px;font-size:14px;line-height:14px;font-weight:700;color:#fff;letter-spacing:0.391px;">Walls</span><svg style="left:1808.3px;top:540.3px" width="10" height="7" viewBox="0 0 10 7"><path d="M0.8 1 L5 5.3 L9.200 1" fill="none" stroke="#fff" stroke-width="1.5"/></svg><span class="t" style="left:1439.2px;top:567.1px;font-size:13px;line-height:13px;color:#fff;letter-spacing:-0.400px;">Wall Thickness</span><div class="a" style="left:1693px;top:562px;width:132px;height:24px;background:#3a3a3a;border-bottom:1px solid #d2d2d2;border-radius:2px 2px 0 0"></div><span class="t" style="left:1699.0px;top:567.1px;font-size:13px;line-height:13px;color:#fff;letter-spacing:-0.459px;">1.6</span><span class="t" style="left:1797.1px;top:567.1px;font-size:13px;line-height:13px;color:#9c9c9c;letter-spacing:-0.136px;">mm</span><span class="t" style="left:1451.2px;top:597.1px;font-size:13px;line-height:13px;font-style:italic;color:#fff;letter-spacing:-0.630px;">Wall Line Count</span><div class="a" style="left:1693px;top:592px;width:132px;height:24px;background:#3a3a3a;border-bottom:1px solid #d2d2d2;border-radius:2px 2px 0 0"></div><span class="t" style="left:1699.0px;top:597.1px;font-size:13px;line-height:13px;color:#fff;letter-spacing:0.000px;">4</span><svg style="left:1666.0px;top:595.8px" width="13.5" height="15.5" viewBox="0 0 16 18"><path d="M8 3.600 A6.400 6.400 0 1 1 1.800 8.800" fill="none" stroke="#1a74e8" stroke-width="1.800"/><path d="M8.600 0.300 L4.600 3.700 L8.600 7.200" fill="none" stroke="#1a74e8" stroke-width="1.800"/></svg><div class="a" style="left:1406px;top:616px;width:456px;height:61px;background:#1f1f1f"></div><div class="a" style="left:1406px;top:623px;width:456px;height:1px;background:#6e6e6e"></div><div class="a" style="left:1418px;top:636px;width:155px;height:30px;border:1px solid #fff;border-radius:2px"></div><svg style="left:1434.500px;top:644.500px" width="9" height="14" viewBox="0 0 9 14"><path d="M7.600 1 L1.600 7 L7.600 13" fill="none" stroke="#fff" stroke-width="1.600"/></svg><span class="t" style="left:1454.5px;top:643.9px;font-size:15px;line-height:15px;color:#fff;letter-spacing:0.298px;">Recommended</span><div class="a" style="left:1887.500px;top:272px;width:5px;height:389px;background:#f4f4f4"></div><div class="a" style="left:1881px;top:262.500px;width:18px;height:18px;border-radius:9px;background:#fff"></div><div class="a" style="left:1881px;top:652px;width:18px;height:18px;border-radius:9px;background:#fff"></div><div class="a" style="left:1876px;top:238px;width:28px;height:19px;background:#1f1f1f;border:1px solid #6e6e6e"></div><svg style="left:1885.500px;top:256px" width="9" height="5" viewBox="0 0 9 5"><path d="M0 0L4.500 4.500L9 0" fill="#1f1f1f" stroke="#6e6e6e" stroke-width="1"/></svg><span class="t" style="left:1883.4px;top:242.1px;font-size:12px;line-height:12px;color:#fff;letter-spacing:-0.080px;">84</span><div class="a" style="left:-3px;top:336px;width:42px;height:336px;background:#1f1f1f;border:1px solid #6e6e6e;border-radius:3px"></div><svg style="left:5px;top:350.0px" width="20" height="20" viewBox="0 0 20 20"><g fill="none" stroke="#5f5f5f" stroke-width="1.800"><path d="M10 1.500V18.500M1.500 10H18.500"/><path d="M7.300 4.200L10 1.500L12.700 4.200M7.300 15.800L10 18.500L12.700 15.800M4.200 7.300L1.500 10L4.200 12.700M15.800 7.300L18.500 10L15.800 12.700"/></g></svg><svg style="left:5px;top:398.3px" width="20" height="20" viewBox="0 0 20 20"><g fill="none" stroke="#5f5f5f" stroke-width="1.800"><path d="M11 1.900H3.900Q1.900 1.900 1.900 3.900V9.500M18.100 9V16.100Q18.100 18.100 16.100 18.100H10.500"/><rect x="1.900" y="12.200" width="5.900" height="5.900"/><path d="M9.500 10.500L17.500 2.500M12 2.200H17.800V8"/></g></svg><svg style="left:5px;top:445.0px" width="20" height="20" viewBox="0 0 20 20"><g fill="none" stroke="#5f5f5f" stroke-width="1.800"><path d="M3.500 6.500H9.500A7 6.500 0 0 1 16.500 11"/><path d="M6.500 3L3 6.500L6.500 10"/><path d="M16.600 12.500A7 6.500 0 0 1 2.200 12.500" stroke-dasharray="1.500 2.300"/></g></svg><svg style="left:5px;top:494.4px" width="20" height="20" viewBox="0 0 20 20"><g stroke="#5f5f5f" stroke-width="1.600"><path d="M1.200 4.800V15.200L6.800 10Z" fill="none"/><path d="M18.800 4.800V15.200L13.200 10Z" fill="#5f5f5f"/><path d="M10 1V19" stroke-dasharray="1.600 1.600" fill="none"/></g></svg><svg style="left:5px;top:541.7px" width="20" height="20" viewBox="0 0 20 20"><g stroke="#5f5f5f" stroke-width="1.700" fill="none"><rect x="2.300" y="1.800" width="5.600" height="5.600"/><rect x="12" y="12" width="5.600" height="5.600"/><path d="M1.500 10.800H8.800V18.200H4Q1.500 18.200 1.500 15.700Z" fill="#5f5f5f"/><path d="M11.500 6.500L16 1.500M13 8.500L18.500 2.800M16 8.500L18.500 6" /></g></svg><svg style="left:5px;top:589.3px" width="20" height="20" viewBox="0 0 20 20"><g stroke="#5f5f5f" stroke-width="1.700" fill="none"><path d="M9 1.500L15.500 8L9 13.500L2.500 8Z"/><path d="M1.500 10.500V18.500M4.800 14.500V18.500M8 17V18.500"/><path d="M13.500 13.500L18 18M18 13.500L13.500 18" stroke-width="1.900"/></g></svg><svg style="left:5px;top:637.7px" width="20" height="20" viewBox="0 0 20 20"><g fill="#5f5f5f"><path d="M0.500 4.500L7.500 1.500L13 4V17L7 20.500L0.500 17.500Z" opacity="0.95"/><ellipse cx="16.500" cy="17.500" rx="5" ry="2.300"/></g></svg><svg style="left:52.500px;top:862.500px" width="9.500" height="6.500" viewBox="0 0 10 7"><path d="M0.800 6 L5 1.700 L9.200 6" fill="none" stroke="#fff" stroke-width="1.500"/></svg><span class="t" style="left:75.5px;top:861.6px;font-size:12px;line-height:12px;color:#e4e4e4;letter-spacing:0.210px;">Object list</span><svg style="left:53px;top:891px" width="13.500" height="12.500" viewBox="0 0 13.500 12.500"><path d="M2.300 8.200 L9.300 1.200 L11.300 3.200 L4.300 10.200 L1.600 10.900Z" fill="#fff"/><path d="M0 11.800H13.200" stroke="#fff" stroke-width="1.300"/></svg><span class="t" style="left:83.6px;top:891.6px;font-size:12px;line-height:12px;color:#f2f2f2;letter-spacing:-0.194px;">CE3S1_ashtray_cover</span><span class="t" style="left:51.9px;top:914.5px;font-size:12px;line-height:12px;color:#f2f2f2;letter-spacing:0.136px;">116.5 x 60.0 x 13.5 mm</span><svg style="left:53.8px;top:944px" width="18.500" height="20" viewBox="0 0 18.500 20"><g fill="none" stroke="#fff" stroke-width="1.700" stroke-linejoin="round"><path d="M9.200 1L17.400 5.500V14.500L9.200 19L1 14.500V5.500Z"/><path d="M1 5.500L9.200 10L17.400 5.500M9.200 10V19"/></g></svg><svg style="left:83.8px;top:944px" width="18.500" height="20" viewBox="0 0 18.500 20"><g stroke="#fff" stroke-width="1.700" stroke-linejoin="round"><path d="M1 6.500H12.500V19H1Z" fill="#fff"/><path d="M1 6.500L5.500 1.500H17.500L12.500 6.500M17.500 1.500V14L12.500 19" fill="none"/></g></svg><svg style="left:113.9px;top:944px" width="18.500" height="20" viewBox="0 0 18.500 20"><g stroke="#fff" stroke-width="1.700" stroke-linejoin="round"><path d="M1 6.500H12.500V19H1Z" fill="none"/><path d="M1 6.500L5.500 1.500H17.500L12.500 6.500Z" fill="#fff"/><path d="M17.500 1.500V14L12.500 19" fill="none"/></g></svg><svg style="left:143.9px;top:944px" width="18.500" height="20" viewBox="0 0 18.500 20"><g stroke="#fff" stroke-width="1.700" stroke-linejoin="round"><path d="M6 6.500H17.500V19H6Z" fill="none"/><path d="M6 6.500L1 1.500H13L17.500 6.500" fill="none"/><path d="M1 1.500V14L6 19V6.500Z" fill="#fff"/></g></svg><svg style="left:174.0px;top:944px" width="18.500" height="20" viewBox="0 0 18.500 20"><g stroke="#fff" stroke-width="1.700" stroke-linejoin="round"><path d="M1 6.500H12.500V19H1Z" fill="none"/><path d="M1 6.500L5.500 1.500H17.500L12.500 6.500" fill="none"/><path d="M17.500 1.500V14L12.500 19V6.500Z" fill="#fff"/></g></svg><svg style="left:660.500px;top:949px" width="15" height="17" viewBox="0 0 15 17"><path d="M1.800 1.800 L13 8.300 L1.800 14.800Z" fill="none" stroke="#fff" stroke-width="1.800" stroke-linejoin="round"/></svg><div class="a" style="left:688.500px;top:954px;width:392px;height:6px;background:#f4f4f4;border-radius:3px"></div><div class="a" style="left:1069.800px;top:948px;width:17.600px;height:17.600px;border-radius:9px;background:#fff"></div><div class="a" style="left:1579px;top:843.500px;width:310.500px;height:116px;background:#1f1f1f;border:1px solid #3c3c3c;border-radius:3px;box-shadow:0 1px 3px rgba(0,0,0,.5)"></div><svg style="left:1599.800px;top:861.400px" width="16" height="16" viewBox="0 0 16 16"><circle cx="8" cy="8" r="7" fill="none" stroke="#fff" stroke-width="1.600"/><path d="M8 3.500V8.500H12" fill="none" stroke="#fff" stroke-width="1.600"/></svg><span class="t" style="left:1623.1px;top:862.6px;font-size:15px;line-height:15px;font-weight:700;color:#fff;letter-spacing:0.138px;">3 hours 45 minutes</span><svg style="left:1851.900px;top:861.400px" width="16" height="16" viewBox="0 0 16 16"><circle cx="8" cy="8" r="7" fill="none" stroke="#fff" stroke-width="1.600"/><path d="M8 7V12" stroke="#fff" stroke-width="1.800"/><circle cx="8" cy="4.600" r="1.100" fill="#fff"/></svg><svg style="left:1599.300px;top:887.500px" width="17" height="17" viewBox="0 0 17 17"><path d="M2.200 13 A7 7 0 1 1 8.500 15.500 H1 V12" fill="none" stroke="#fff" stroke-width="1.600"/><circle cx="8.800" cy="8.500" r="2.200" fill="none" stroke="#fff" stroke-width="1.500"/><path d="M9.500 6.500 L11 4.800" stroke="#fff" stroke-width="1.400"/></svg><span class="t" style="left:1623.1px;top:888.8px;font-size:13px;line-height:13px;color:#fff;letter-spacing:-0.337px;">34g · 11.14m</span><div class="a" style="left:1599px;top:914px;width:270px;height:30px;background:#196ef0"></div><span class="t" style="left:1691.7px;top:922.0px;font-size:15px;line-height:15px;color:#fff;letter-spacing:-0.025px;">Save to Disk</span><div class="a" style="left:1536px;top:912px;width:42px;height:30px;background:#1f1f1f;border:1px solid #fff"></div><svg style="left:1549px;top:921.500px" width="16" height="11.500" viewBox="0 0 16 11.500"><path d="M4.500 1.800L1.200 5.700L4.500 9.600M11.500 1.800L14.800 5.700L11.500 9.600M9.300 0.500L6.700 11" fill="none" stroke="#fff" stroke-width="1.500"/></svg><div class="a" style="left:1557.100px;top:903.200px;width:17.600px;height:17.600px;border-radius:9px;background:#f0141e"></div><span class="t" style="left:1562.4px;top:906.0px;font-size:13px;line-height:13px;color:#fff;letter-spacing:0.000px;">1</span></div>
</body></html>
